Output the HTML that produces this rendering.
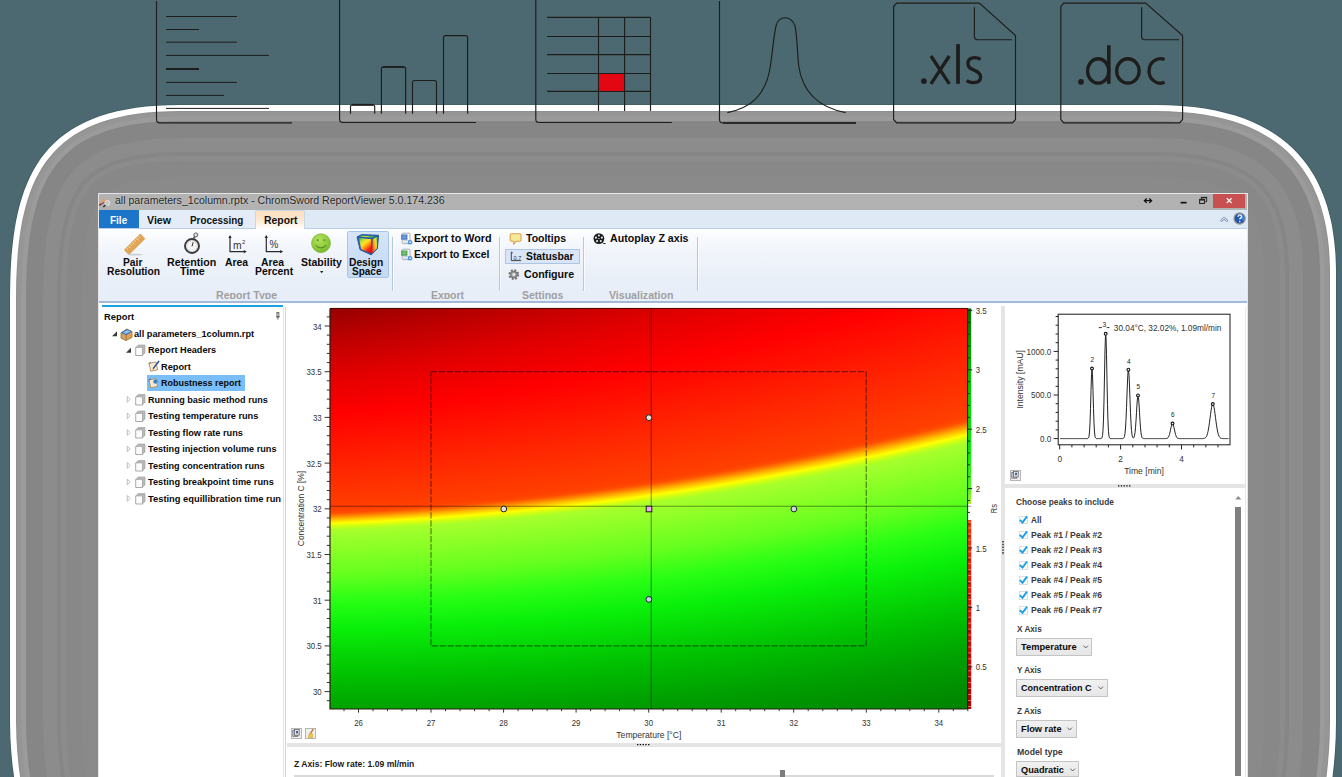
<!DOCTYPE html>
<html><head><meta charset="utf-8"><title>ChromSword ReportViewer</title>
<style>
html,body{margin:0;padding:0;width:1342px;height:777px;overflow:hidden;}
body{width:1342px;height:777px;overflow:hidden;position:relative;background:#4c6971;font-family:"Liberation Sans",sans-serif;}
.t{position:absolute;line-height:12px;height:12px;white-space:nowrap;transform-origin:0 0;}
.a{position:absolute;}
svg{position:absolute;overflow:visible;}
</style></head><body>

<svg id="panel" style="left:0;top:0" width="1342" height="777" viewBox="0 0 1342 777">
<path d="M13.3 777 L11.7 765 L10.5 752 L9.6 738 L9.2 722 L9.2 300.0 L9.3 290.3 L9.5 280.8 L9.8 271.5 L10.3 262.4 L10.9 253.5 L11.8 244.8 L12.8 236.4 L14.0 228.1 L15.5 220.0 L17.1 212.2 L19.0 204.6 L21.2 197.2 L23.6 190.1 L26.3 183.2 L29.3 176.5 L32.6 170.1 L36.2 164.0 L40.2 158.2 L44.4 152.6 L49.1 147.3 L54.0 142.2 L59.4 137.5 L65.1 133.0 L71.3 128.9 L77.8 125.0 L84.8 121.5 L92.2 118.3 L100.0 115.4 L108.3 112.8 L117.1 110.5 L126.3 108.6 L136.0 107.0 L146.2 105.8 L157.0 104.9 L168.2 104.4 L180.0 104.2 L1156.0 104.2 L1169.2 104.4 L1181.7 105.1 L1193.7 106.3 L1205.0 107.8 L1215.7 109.8 L1225.8 112.1 L1235.3 114.8 L1244.3 117.9 L1252.8 121.3 L1260.7 125.0 L1268.2 129.0 L1275.1 133.3 L1281.6 137.9 L1287.6 142.7 L1293.2 147.7 L1298.3 153.0 L1303.1 158.4 L1307.4 164.0 L1311.4 169.8 L1315.0 175.7 L1318.2 181.8 L1321.2 187.9 L1323.8 194.1 L1326.1 200.4 L1328.1 206.8 L1329.9 213.2 L1331.4 219.6 L1332.7 226.0 L1333.8 232.4 L1334.7 238.7 L1335.4 245.0 L1336.0 251.2 L1336.4 257.3 L1336.6 263.3 L1336.8 269.2 L1336.8 275.0 L1336.8 722 L1336.5 738 L1335.7 752 L1334.6 765 L1333.3 777 Z" fill="#3f5c64"/>
<path d="M14.1 777 L12.5 765 L11.3 752 L10.4 738 L10.0 722 L10.0 300.0 L10.1 290.3 L10.3 280.9 L10.6 271.6 L11.1 262.5 L11.7 253.6 L12.6 244.9 L13.6 236.5 L14.8 228.2 L16.2 220.2 L17.9 212.4 L19.8 204.8 L22.0 197.4 L24.4 190.3 L27.1 183.5 L30.0 176.9 L33.3 170.5 L36.9 164.4 L40.8 158.6 L45.1 153.1 L49.6 147.8 L54.6 142.8 L59.9 138.1 L65.6 133.7 L71.7 129.6 L78.2 125.7 L85.1 122.2 L92.5 119.0 L100.3 116.1 L108.5 113.6 L117.2 111.3 L126.4 109.4 L136.1 107.8 L146.3 106.6 L157.0 105.7 L168.2 105.2 L180.0 105.0 L1156.0 105.0 L1169.2 105.2 L1181.7 105.9 L1193.6 107.0 L1204.8 108.6 L1215.5 110.5 L1225.6 112.9 L1235.1 115.6 L1244.0 118.6 L1252.5 122.0 L1260.4 125.7 L1267.8 129.7 L1274.7 134.0 L1281.1 138.5 L1287.1 143.3 L1292.6 148.3 L1297.7 153.5 L1302.4 158.9 L1306.8 164.5 L1310.7 170.2 L1314.3 176.1 L1317.5 182.1 L1320.4 188.2 L1323.0 194.4 L1325.3 200.7 L1327.4 207.0 L1329.1 213.4 L1330.7 219.8 L1332.0 226.1 L1333.0 232.5 L1333.9 238.8 L1334.6 245.1 L1335.2 251.3 L1335.6 257.4 L1335.8 263.4 L1336.0 269.3 L1336.0 275.0 L1336.0 722 L1335.7 738 L1334.9 752 L1333.8 765 L1332.5 777 Z" fill="#ffffff"/>
<path d="M20.1 777 L18.5 765 L17.3 752 L16.4 738 L16.0 722 L16.0 300.0 L16.1 290.4 L16.2 281.0 L16.6 271.9 L17.1 262.9 L17.7 254.1 L18.5 245.6 L19.5 237.3 L20.7 229.2 L22.1 221.3 L23.8 213.7 L25.6 206.4 L27.7 199.3 L30.0 192.4 L32.6 185.8 L35.4 179.5 L38.6 173.4 L42.0 167.6 L45.7 162.1 L49.7 156.9 L54.0 151.9 L58.7 147.2 L63.7 142.7 L69.1 138.5 L74.9 134.6 L81.1 131.0 L87.7 127.6 L94.7 124.6 L102.2 121.8 L110.2 119.3 L118.6 117.2 L127.5 115.3 L137.0 113.8 L146.9 112.6 L157.4 111.7 L168.4 111.2 L180.0 111.0 L1156.0 111.0 L1169.0 111.2 L1181.2 111.9 L1192.9 113.0 L1203.9 114.5 L1214.3 116.4 L1224.1 118.7 L1233.3 121.3 L1242.0 124.2 L1250.1 127.5 L1257.7 131.1 L1264.8 134.9 L1271.4 139.0 L1277.5 143.3 L1283.2 147.8 L1288.5 152.6 L1293.3 157.6 L1297.8 162.7 L1301.9 168.0 L1305.7 173.5 L1309.1 179.1 L1312.2 184.8 L1314.9 190.7 L1317.4 196.6 L1319.7 202.7 L1321.6 208.7 L1323.3 214.9 L1324.8 221.0 L1326.1 227.2 L1327.1 233.4 L1328.0 239.5 L1328.7 245.7 L1329.2 251.7 L1329.6 257.7 L1329.8 263.6 L1330.0 269.4 L1330.0 275.0 L1330.0 722 L1329.7 738 L1328.9 752 L1327.8 765 L1326.5 777 Z" fill="#8f8f8f"/>
<path d="M21.1 777 L19.5 765 L18.3 752 L17.4 738 L17.0 722 L17.0 300.0 L17.1 290.4 L17.2 281.1 L17.6 271.9 L18.1 262.9 L18.7 254.2 L19.5 245.7 L20.5 237.4 L21.7 229.3 L23.1 221.5 L24.7 213.9 L26.6 206.6 L28.6 199.6 L31.0 192.7 L33.5 186.2 L36.4 179.9 L39.5 173.9 L42.8 168.2 L46.5 162.7 L50.5 157.5 L54.8 152.6 L59.4 147.9 L64.4 143.5 L69.7 139.3 L75.4 135.5 L81.6 131.9 L88.1 128.6 L95.1 125.5 L102.5 122.8 L110.4 120.3 L118.8 118.1 L127.7 116.3 L137.1 114.8 L147.0 113.6 L157.5 112.7 L168.5 112.2 L180.0 112.0 L1156.0 112.0 L1168.9 112.2 L1181.2 112.9 L1192.8 114.0 L1203.7 115.5 L1214.1 117.4 L1223.8 119.6 L1233.0 122.3 L1241.6 125.2 L1249.7 128.4 L1257.2 131.9 L1264.3 135.7 L1270.8 139.8 L1276.9 144.1 L1282.5 148.6 L1287.8 153.3 L1292.6 158.3 L1297.0 163.4 L1301.1 168.6 L1304.8 174.0 L1308.2 179.6 L1311.3 185.3 L1314.0 191.1 L1316.5 197.0 L1318.7 203.0 L1320.7 209.0 L1322.4 215.1 L1323.8 221.3 L1325.1 227.4 L1326.1 233.5 L1327.0 239.7 L1327.7 245.8 L1328.2 251.8 L1328.6 257.7 L1328.8 263.6 L1329.0 269.4 L1329.0 275.0 L1329.0 722 L1328.7 738 L1327.9 752 L1326.8 765 L1325.5 777 Z" fill="#969696"/>
<path d="M25.6 777 L24.0 765 L22.8 752 L21.9 738 L21.5 722 L21.5 300.0 L21.6 290.5 L21.7 281.2 L22.1 272.1 L22.5 263.2 L23.2 254.6 L24.0 246.2 L25.0 238.0 L26.2 230.1 L27.5 222.4 L29.1 215.0 L30.9 207.8 L32.9 200.9 L35.2 194.3 L37.7 187.9 L40.4 181.9 L43.4 176.1 L46.6 170.6 L50.2 165.3 L54.0 160.3 L58.1 155.6 L62.5 151.2 L67.2 146.9 L72.4 143.0 L77.8 139.3 L83.7 135.8 L90.0 132.6 L96.8 129.7 L104.0 127.0 L111.7 124.6 L119.8 122.5 L128.5 120.7 L137.7 119.2 L147.5 118.0 L157.7 117.2 L168.6 116.7 L180.0 116.5 L1156.0 116.5 L1168.8 116.7 L1180.8 117.4 L1192.3 118.5 L1203.0 119.9 L1213.2 121.8 L1222.7 124.0 L1231.7 126.5 L1240.1 129.4 L1247.9 132.5 L1255.2 136.0 L1262.0 139.6 L1268.3 143.6 L1274.2 147.7 L1279.6 152.0 L1284.6 156.6 L1289.3 161.3 L1293.5 166.2 L1297.5 171.3 L1301.0 176.5 L1304.3 181.8 L1307.3 187.3 L1309.9 192.9 L1312.3 198.6 L1314.5 204.4 L1316.3 210.3 L1318.0 216.3 L1319.4 222.2 L1320.6 228.2 L1321.7 234.2 L1322.5 240.2 L1323.2 246.2 L1323.7 252.1 L1324.1 258.0 L1324.3 263.8 L1324.5 269.4 L1324.5 275.0 L1324.5 722 L1324.2 738 L1323.4 752 L1322.3 765 L1321.0 777 Z" fill="#9b9b9b"/>
<path d="M30.1 777 L28.5 765 L27.3 752 L26.4 738 L26.0 722 L26.0 300.0 L26.1 290.5 L26.2 281.3 L26.6 272.3 L27.0 263.5 L27.7 255.0 L28.5 246.6 L29.4 238.6 L30.6 230.8 L31.9 223.2 L33.5 216.0 L35.3 209.0 L37.2 202.3 L39.4 195.8 L41.8 189.7 L44.5 183.8 L47.3 178.3 L50.5 173.0 L53.8 167.9 L57.5 163.2 L61.4 158.7 L65.6 154.4 L70.1 150.4 L75.0 146.6 L80.2 143.1 L85.9 139.8 L91.9 136.7 L98.5 133.9 L105.4 131.3 L112.9 129.0 L120.8 126.9 L129.3 125.1 L138.4 123.7 L147.9 122.5 L158.0 121.7 L168.7 121.2 L180.0 121.0 L1156.0 121.0 L1168.6 121.2 L1180.5 121.9 L1191.7 122.9 L1202.3 124.4 L1212.3 126.2 L1221.6 128.4 L1230.3 130.8 L1238.5 133.6 L1246.1 136.7 L1253.2 140.0 L1259.7 143.5 L1265.8 147.3 L1271.5 151.3 L1276.7 155.5 L1281.5 159.8 L1286.0 164.4 L1290.1 169.1 L1293.8 173.9 L1297.3 178.9 L1300.4 184.1 L1303.2 189.4 L1305.8 194.8 L1308.1 200.3 L1310.2 205.9 L1312.0 211.6 L1313.6 217.4 L1315.0 223.2 L1316.2 229.1 L1317.2 234.9 L1318.0 240.8 L1318.7 246.6 L1319.2 252.5 L1319.6 258.2 L1319.8 263.9 L1320.0 269.5 L1320.0 275.0 L1320.0 722 L1319.7 738 L1318.9 752 L1317.8 765 L1316.5 777 Z" fill="#868686"/>
<path d="M47.1 777 L45.5 765 L44.3 752 L43.4 738 L43.0 722 L43.0 300.0 L43.1 290.8 L43.2 281.8 L43.6 273.1 L44.0 264.6 L44.6 256.4 L45.4 248.5 L46.3 240.8 L47.4 233.5 L48.6 226.5 L50.1 219.8 L51.7 213.4 L53.4 207.4 L55.4 201.7 L57.5 196.3 L59.8 191.2 L62.2 186.5 L64.8 182.0 L67.6 177.8 L70.6 173.9 L73.8 170.2 L77.3 166.8 L81.0 163.5 L85.0 160.4 L89.3 157.5 L94.0 154.7 L99.2 152.1 L104.8 149.6 L110.9 147.4 L117.5 145.3 L124.7 143.5 L132.4 141.9 L140.7 140.5 L149.6 139.4 L159.1 138.6 L169.3 138.2 L180.0 138.0 L1156.0 138.0 L1168.0 138.2 L1179.2 138.8 L1189.8 139.8 L1199.6 141.2 L1208.8 142.9 L1217.4 144.8 L1225.3 147.1 L1232.6 149.6 L1239.3 152.3 L1245.5 155.2 L1251.2 158.3 L1256.5 161.5 L1261.3 164.9 L1265.7 168.4 L1269.7 172.1 L1273.5 175.9 L1276.9 179.8 L1280.1 183.9 L1283.0 188.2 L1285.6 192.5 L1288.1 197.1 L1290.3 201.7 L1292.3 206.5 L1294.1 211.4 L1295.7 216.5 L1297.2 221.6 L1298.4 226.9 L1299.5 232.2 L1300.4 237.5 L1301.2 242.9 L1301.8 248.3 L1302.3 253.7 L1302.6 259.1 L1302.8 264.5 L1303.0 269.8 L1303.0 275.0 L1303.0 722 L1302.7 738 L1301.9 752 L1300.8 765 L1299.5 777 Z" fill="#8c8c8c"/>
<path d="M61.1 777 L59.5 765 L58.3 752 L57.4 738 L57.0 722 L57.0 300.0 L57.1 291.0 L57.2 282.2 L57.5 273.7 L58.0 265.5 L58.6 257.6 L59.3 250.0 L60.2 242.7 L61.2 235.8 L62.4 229.2 L63.7 223.0 L65.2 217.1 L66.8 211.6 L68.5 206.5 L70.4 201.7 L72.4 197.3 L74.5 193.2 L76.7 189.5 L79.0 186.0 L81.5 182.8 L84.1 179.8 L86.9 177.0 L89.9 174.3 L93.2 171.7 L96.8 169.3 L100.8 167.0 L105.2 164.7 L110.0 162.6 L115.4 160.6 L121.3 158.8 L127.9 157.1 L135.0 155.6 L142.7 154.4 L151.0 153.4 L160.0 152.6 L169.7 152.2 L180.0 152.0 L1156.0 152.0 L1167.5 152.2 L1178.2 152.8 L1188.2 153.7 L1197.4 155.0 L1206.0 156.6 L1213.9 158.4 L1221.1 160.4 L1227.7 162.7 L1233.7 165.1 L1239.2 167.7 L1244.2 170.4 L1248.7 173.2 L1252.9 176.1 L1256.6 179.1 L1260.0 182.2 L1263.2 185.4 L1266.1 188.7 L1268.8 192.2 L1271.2 195.8 L1273.5 199.5 L1275.6 203.4 L1277.5 207.4 L1279.3 211.6 L1280.9 216.0 L1282.3 220.5 L1283.6 225.1 L1284.8 229.9 L1285.7 234.7 L1286.6 239.7 L1287.3 244.7 L1287.9 249.7 L1288.3 254.8 L1288.6 259.9 L1288.8 264.9 L1289.0 270.0 L1289.0 275.0 L1289.0 722 L1288.7 738 L1287.9 752 L1286.8 765 L1285.5 777 Z" fill="#868686"/>
<path d="M65.1 777 L63.5 765 L62.3 752 L61.4 738 L61.0 722 L61.0 300.0 L61.1 291.0 L61.2 282.3 L61.5 273.8 L62.0 265.7 L62.5 257.9 L63.3 250.4 L64.1 243.2 L65.1 236.4 L66.3 230.0 L67.6 223.9 L69.0 218.2 L70.6 212.8 L72.3 207.9 L74.1 203.3 L76.0 199.0 L78.0 195.2 L80.1 191.6 L82.3 188.3 L84.6 185.3 L87.0 182.5 L89.6 179.9 L92.5 177.4 L95.5 175.0 L98.9 172.7 L102.7 170.5 L106.9 168.4 L111.5 166.3 L116.7 164.4 L122.4 162.6 L128.8 161.0 L135.7 159.6 L143.3 158.3 L151.5 157.3 L160.3 156.6 L169.8 156.2 L180.0 156.0 L1156.0 156.0 L1167.3 156.2 L1177.9 156.8 L1187.7 157.7 L1196.8 159.0 L1205.2 160.5 L1212.9 162.3 L1219.9 164.3 L1226.3 166.4 L1232.2 168.8 L1237.4 171.2 L1242.2 173.8 L1246.5 176.5 L1250.5 179.3 L1254.0 182.1 L1257.3 185.1 L1260.3 188.1 L1263.0 191.2 L1265.5 194.5 L1267.9 197.9 L1270.0 201.5 L1272.0 205.2 L1273.9 209.1 L1275.6 213.1 L1277.1 217.3 L1278.5 221.6 L1279.8 226.1 L1280.9 230.7 L1281.8 235.5 L1282.6 240.3 L1283.3 245.2 L1283.9 250.1 L1284.3 255.1 L1284.6 260.1 L1284.8 265.1 L1285.0 270.1 L1285.0 275.0 L1285.0 722 L1284.7 738 L1283.9 752 L1282.8 765 L1281.5 777 Z" fill="#8c8c8c"/>
<path d="M70.1 777 L68.5 765 L67.3 752 L66.4 738 L66.0 722 L66.0 300.0 L66.1 291.1 L66.2 282.4 L66.5 274.1 L67.0 266.0 L67.5 258.3 L68.2 250.9 L69.1 243.9 L70.1 237.2 L71.2 230.9 L72.5 225.0 L73.9 219.5 L75.4 214.3 L77.0 209.6 L78.7 205.2 L80.5 201.2 L82.4 197.6 L84.3 194.3 L86.3 191.2 L88.5 188.5 L90.7 185.9 L93.1 183.5 L95.6 181.2 L98.5 179.0 L101.6 176.9 L105.1 174.9 L109.0 172.9 L113.4 171.0 L118.3 169.1 L123.8 167.4 L129.9 165.9 L136.6 164.5 L144.0 163.3 L152.0 162.3 L160.6 161.6 L170.0 161.2 L180.0 161.0 L1156.0 161.0 L1167.1 161.2 L1177.5 161.8 L1187.1 162.7 L1196.0 163.9 L1204.2 165.4 L1211.6 167.1 L1218.4 169.0 L1224.6 171.1 L1230.2 173.4 L1235.2 175.7 L1239.7 178.2 L1243.8 180.7 L1247.5 183.3 L1250.8 185.9 L1253.8 188.7 L1256.6 191.5 L1259.1 194.4 L1261.5 197.5 L1263.7 200.6 L1265.7 204.0 L1267.6 207.5 L1269.3 211.1 L1270.9 214.9 L1272.4 218.9 L1273.7 223.1 L1274.9 227.4 L1276.0 231.8 L1276.9 236.4 L1277.7 241.0 L1278.4 245.8 L1278.9 250.6 L1279.3 255.5 L1279.6 260.4 L1279.8 265.2 L1280.0 270.1 L1280.0 275.0 L1280.0 722 L1279.7 738 L1278.9 752 L1277.8 765 L1276.5 777 Z" fill="#888888"/>
<path d="M86.1 777 L84.5 765 L83.3 752 L82.4 738 L82.0 722 L82.0 300.0 L82.1 291.3 L82.2 282.9 L82.5 274.8 L82.9 267.0 L83.5 259.7 L84.1 252.6 L84.9 246.0 L85.9 239.8 L86.9 234.0 L88.1 228.6 L89.3 223.7 L90.6 219.1 L92.0 215.1 L93.4 211.4 L94.9 208.2 L96.4 205.3 L97.9 202.8 L99.4 200.5 L100.9 198.6 L102.4 196.8 L104.1 195.1 L105.9 193.5 L107.8 192.0 L110.1 190.4 L112.8 188.9 L115.8 187.4 L119.4 185.8 L123.5 184.3 L128.2 182.8 L133.5 181.5 L139.5 180.2 L146.2 179.1 L153.6 178.2 L161.7 177.6 L170.5 177.1 L180.0 177.0 L1156.0 177.0 L1166.6 177.2 L1176.3 177.7 L1185.3 178.6 L1193.5 179.7 L1200.9 181.0 L1207.6 182.6 L1213.7 184.3 L1219.0 186.1 L1223.8 188.0 L1228.0 190.0 L1231.7 192.0 L1235.0 194.0 L1237.8 196.1 L1240.4 198.1 L1242.7 200.2 L1244.8 202.3 L1246.7 204.6 L1248.5 206.9 L1250.2 209.3 L1251.8 211.9 L1253.3 214.7 L1254.7 217.6 L1256.0 220.8 L1257.3 224.1 L1258.4 227.7 L1259.4 231.4 L1260.3 235.3 L1261.2 239.3 L1261.9 243.5 L1262.5 247.8 L1263.0 252.2 L1263.4 256.7 L1263.7 261.2 L1263.9 265.8 L1264.0 270.4 L1264.0 275.0 L1264.0 722 L1263.7 738 L1262.9 752 L1261.8 765 L1260.5 777 Z" fill="#8a8a8a"/>
</svg>
<svg id="topicons" style="left:0;top:0" width="1342" height="140" viewBox="0 0 1342 140" fill="none" stroke="#1d1d1b" stroke-width="1.15" stroke-linecap="butt">
<path d="M156.5 1 V119.5 Q156.5 122.8 160 122.8 H292" />
<path d="M166 16.5 H237" stroke-width="1"/>
<path d="M166 29.5 H199" stroke-width="1"/>
<path d="M166 42.2 H237" stroke-width="1"/>
<path d="M166 55.4 H269" stroke-width="1"/>
<path d="M166 69 H199" stroke-width="1.8"/>
<path d="M166 82.4 H237" stroke-width="1"/>
<path d="M166 95.4 H224" stroke-width="1"/>
<path d="M166 108.4 H269" stroke-width="1"/>
<path d="M339.6 0 V119.5 Q339.6 122.5 343 122.5 H476" />
<path d="M350.5 113.8 V106.8 Q350.5 104.8 352.5 104.8 H372.7 Q374.7 104.8 374.7 106.8 V113.8" />
<path d="M352.0 104.8 H373.2" stroke-width="1.8"/>
<path d="M381.4 113.8 V68.9 Q381.4 66.9 383.4 66.9 H403.6 Q405.6 66.9 405.6 68.9 V113.8" />
<path d="M382.9 66.9 H404.1" stroke-width="1.8"/>
<path d="M412.5 113.8 V82.5 Q412.5 80.5 414.5 80.5 H434.5 Q436.5 80.5 436.5 82.5 V113.8" />
<path d="M443.5 113.8 V37.6 Q443.5 35.6 445.5 35.6 H465.6 Q467.6 35.6 467.6 37.6 V113.8" />
<path d="M535.8 0 V119.5 Q535.8 122.5 539 122.5 H671.8" />
<path d="M547 17.4 H650.5" />
<path d="M547 36.5 H650.5" />
<path d="M547 54.6 H650.5" />
<path d="M547 73.5 H650.5" />
<path d="M547 91.4 H650.5" />
<path d="M598.5 17.4 V110.9" />
<path d="M624.6 17.4 V110.9" />
<path d="M650.5 17.4 V110.9" />
<rect x="599" y="74" width="25.1" height="16.9" fill="#e30613" stroke="none"/>
<path d="M719.5 1 V119.5 Q719.5 123 723 123 H856" />
<path d="M723 123 H856" stroke-width="1.6"/>
<path d="M727.3 112.6 C750 108, 766 96, 770.4 66 C773 48, 774 34, 776 26 C779 15, 791 15, 795 26 C797 34, 797 48, 798.7 66 C803 96, 822 108, 845.6 112.6" />
<path d="M896.6 3.1 H979.4 L1015.5 35.6 V119.5 L1012.5 122.9 H896.6 L893.6 119.5 V6.5 Z" />
<path d="M974.4 7.3 V36.6 Q974.4 39.7 977.4 39.7 H1012" />
<path d="M1063.8 3.1 H1145.6 L1182.6 35.6 V119.5 L1179.6 122.9 H1063.8 L1060.8 119.5 V6.5 Z" />
<path d="M1141.6 7.3 V36.6 Q1141.6 39.7 1144.6 39.7 H1179" />
<g stroke-width="3.3" stroke="#1d1d1b">
<circle cx="923.9" cy="81.1" r="2.9" fill="#1d1d1b" stroke="none"/>
<path d="M931 56 L949.3 83.8 M949.3 56 L931 83.8" />
<path d="M958 44.1 V83.8" stroke-width="3.8"/>
<path d="M980.6 59.3 C977 57.4, 967.9 55.6, 967.9 63.8 C967.9 71.5, 980.6 69.2, 980.6 76.9 C980.6 84.2, 970.5 83.2, 966.6 80.6" />
<circle cx="1081" cy="81.8" r="2.9" fill="#1d1d1b" stroke="none"/>
<ellipse cx="1098.2" cy="70.95" rx="10.6" ry="12.2"/>
<path d="M1108.8 45.2 V83.9" stroke-width="3.6"/>
<ellipse cx="1127.9" cy="70.95" rx="11.25" ry="12.2"/>
<path d="M1164.6 59.6 A11.4 12.2 0 1 0 1164.6 82.3" />
</g>
</svg>
<div class="a" style="left:98px;top:193px;width:1150px;height:584px;background:#e6e6e6;"></div>
<div class="a" style="left:99px;top:194px;width:1148px;height:583px;background:#fff;"></div>
<div class="a" style="left:99px;top:194px;width:1148px;height:16.5px;background:#b2b2b2;"></div>
<div class="t" style="left:114.80px;top:194.53px;font-size:10.3px;color:#262626;transform:scaleX(1.0253);text-shadow:0 0 2px rgba(255,255,255,.55);">all parameters_1column.rptx - ChromSword ReportViewer 5.0.174.236</div>
<svg style="left:0;top:0" width="1342" height="777" viewBox="0 0 1342 777"><path d="M100 203.6 L101.3 200.2 L102.5 202 L103.7 196 L105.7 202.8 Z" fill="#f2a23a"/><path d="M99.5 204.9 L104.8 202.3" stroke="#8040a8" stroke-width="1.2"/><path d="M99.2 205.2 L101 204.3" stroke="#6a3a14" stroke-width="1.3"/><circle cx="107.4" cy="202.9" r="2.5" fill="rgba(205,205,205,.7)" stroke="#e2e2e2" stroke-width="1"/><path d="M105.5 204.9 L103.3 206.9" stroke="#2e2e2e" stroke-width="1.4"/></svg>
<svg style="left:1130px;top:193px" width="118" height="18" viewBox="1130 193 118 18"><path d="M1144.5 200.7 H1151.5 M1146.7 198.5 L1144.4 200.7 L1146.7 202.9 M1149.3 198.5 L1151.6 200.7 L1149.3 202.9" stroke="#111" stroke-width="1.25" fill="none"/><rect x="1180.6" y="201.8" width="6" height="1.7" fill="#111"/><rect x="1199.6" y="199.8" width="4.8" height="3.7" fill="none" stroke="#222" stroke-width="1"/><path d="M1199.1 199.6 h5.8" stroke="#222" stroke-width="1.5"/><path d="M1201.4 198.9 V197.6 H1206.6 V201.7 H1205.2" fill="none" stroke="#222" stroke-width="1"/><path d="M1200.9 197.5 h6.2" stroke="#222" stroke-width="1.3"/><rect x="1213" y="194" width="32" height="14" fill="#c75050"/><path d="M1226.8 198.2 l4.8 4.8 M1231.6 198.2 l-4.8 4.8" stroke="#fff8ea" stroke-width="1.25"/></svg>
<div class="a" style="left:99px;top:210px;width:1148px;height:19px;background:#dfe9f5;"></div>
<div class="a" style="left:99px;top:228px;width:1148px;height:1px;background:#b9cde6;"></div>
<div class="a" style="left:139px;top:210px;width:116px;height:18px;background:#e3ecf7;"></div>
<div class="a" style="left:99px;top:210px;width:40px;height:18px;background:#1b75c9;"></div>
<div class="t" style="left:110.40px;top:213.96px;font-size:10.5px;font-weight:bold;color:#fff;transform:scaleX(0.9509);">File</div>
<div class="t" style="left:146.90px;top:213.96px;font-size:10.5px;font-weight:bold;color:#111;transform:scaleX(1.0110);">View</div>
<div class="t" style="left:190.20px;top:213.96px;font-size:10.5px;font-weight:bold;color:#111;transform:scaleX(0.9433);">Processing</div>
<div class="a" style="left:255px;top:210px;width:50px;height:19px;background:linear-gradient(#fddfbe 0%,#fde5cb 42%,#fdf2e4 72%,#fefefe 100%);border:1px solid #c9d6e6;border-bottom:none;box-sizing:border-box;border-radius:2px 2px 0 0;"></div>
<div class="t" style="left:263.80px;top:213.96px;font-size:10.5px;font-weight:bold;color:#111;transform:scaleX(0.9901);">Report</div>
<svg style="left:1215px;top:211px" width="32" height="17" viewBox="1215 211 32 17"><path d="M1221.5 220.7 L1224.2 218.1 L1226.9 220.7" fill="none" stroke="#7f93b8" stroke-width="2.5" stroke-linejoin="round" stroke-linecap="round"/><path d="M1221.5 220.7 L1224.2 218.1 L1226.9 220.7" fill="none" stroke="#fff" stroke-width="1" stroke-linejoin="round" stroke-linecap="round"/><circle cx="1239.6" cy="218.5" r="5.6" fill="#1c56ad" stroke="#9a9a9a" stroke-width="1.2"/><path d="M1240.5 214.5 a4.2 4.2 0 0 1 3 6.5 l-3 -2.5 Z" fill="#3a8ae0"/><path d="M1237.9 216.8 q0.3 -1.9 1.9 -1.9 q1.8 0 1.8 1.6 q0 1 -1 1.6 q-0.8 0.5 -0.8 1.5" fill="none" stroke="#fff" stroke-width="1.3"/><circle cx="1239.8" cy="221.6" r="0.8" fill="#fff"/></svg>
<div class="a" style="left:99px;top:229px;width:1148px;height:72px;background:linear-gradient(#fdfeff 0%,#f3f6fb 25%,#e9eff8 70%,#e8eef8 100%);"></div>
<div class="a" style="left:99px;top:300.9px;width:1148px;height:1.8000000000000114px;background:#a3bbd8;"></div>
<div class="a" style="left:346.5px;top:231px;width:42.0px;height:47px;background:linear-gradient(#d6e5f8,#c4d9f3);border:1px solid #a7c4ea;box-sizing:border-box;border-radius:2px;"></div>
<div class="a" style="left:392.1px;top:237px;width:1.0px;height:54px;background:#b6c8de;"></div>
<div class="a" style="left:393.1px;top:237px;width:1.0px;height:54px;background:rgba(255,255,255,.7);"></div>
<div class="a" style="left:499.0px;top:237px;width:1.0px;height:54px;background:#b6c8de;"></div>
<div class="a" style="left:500.0px;top:237px;width:1.0px;height:54px;background:rgba(255,255,255,.7);"></div>
<div class="a" style="left:583.0px;top:237px;width:1.0px;height:54px;background:#b6c8de;"></div>
<div class="a" style="left:584.0px;top:237px;width:1.0px;height:54px;background:rgba(255,255,255,.7);"></div>
<div class="a" style="left:697.0px;top:237px;width:1.0px;height:54px;background:#b6c8de;"></div>
<div class="a" style="left:698.0px;top:237px;width:1.0px;height:54px;background:rgba(255,255,255,.7);"></div>
<div class="t" style="left:123.00px;top:256.16px;font-size:10.5px;font-weight:bold;color:#0c0c0c;transform:scaleX(0.9775);">Pair</div>
<div class="t" style="left:107.10px;top:265.16px;font-size:10.5px;font-weight:bold;color:#0c0c0c;transform:scaleX(0.9770);">Resolution</div>
<div class="t" style="left:166.50px;top:256.16px;font-size:10.5px;font-weight:bold;color:#0c0c0c;transform:scaleX(1.0162);">Retention</div>
<div class="t" style="left:179.50px;top:265.16px;font-size:10.5px;font-weight:bold;color:#0c0c0c;transform:scaleX(1.0116);">Time</div>
<div class="t" style="left:225.30px;top:256.16px;font-size:10.5px;font-weight:bold;color:#0c0c0c;transform:scaleX(0.9894);">Area</div>
<div class="t" style="left:260.90px;top:256.16px;font-size:10.5px;font-weight:bold;color:#0c0c0c;transform:scaleX(0.9851);">Area</div>
<div class="t" style="left:254.80px;top:265.16px;font-size:10.5px;font-weight:bold;color:#0c0c0c;transform:scaleX(0.9891);">Percent</div>
<div class="t" style="left:300.70px;top:256.16px;font-size:10.5px;font-weight:bold;color:#0c0c0c;transform:scaleX(1.0014);">Stability</div>
<div class="t" style="left:349.20px;top:256.16px;font-size:10.5px;font-weight:bold;color:#0c0c0c;transform:scaleX(0.9769);">Design</div>
<div class="t" style="left:352.10px;top:265.16px;font-size:10.5px;font-weight:bold;color:#0c0c0c;transform:scaleX(0.9535);">Space</div>
<svg style="left:318px;top:270px" width="8" height="5" viewBox="0 0 8 5"><path d="M2 1 h3.4 l-1.7 2.2 Z" fill="#222"/></svg>
<div class="t" style="left:414.10px;top:232.46px;font-size:10.5px;font-weight:bold;color:#0c0c0c;transform:scaleX(1.0247);">Export to Word</div>
<div class="t" style="left:414.10px;top:248.26px;font-size:10.5px;font-weight:bold;color:#0c0c0c;transform:scaleX(0.9851);">Export to Excel</div>
<div class="t" style="left:526.20px;top:232.06px;font-size:10.5px;font-weight:bold;color:#0c0c0c;transform:scaleX(0.9988);">Tooltips</div>
<div class="a" style="left:505.4px;top:248.8px;width:74.39999999999998px;height:15.5px;background:#d9e6f7;border:1px solid #aac5e8;box-sizing:border-box;"></div>
<div class="t" style="left:526.20px;top:250.06px;font-size:10.5px;font-weight:bold;color:#0c0c0c;transform:scaleX(0.9828);">Statusbar</div>
<div class="t" style="left:524.00px;top:268.26px;font-size:10.5px;font-weight:bold;color:#0c0c0c;transform:scaleX(1.0105);">Configure</div>
<div class="t" style="left:609.80px;top:232.06px;font-size:10.5px;font-weight:bold;color:#0c0c0c;transform:scaleX(1.0116);">Autoplay Z axis</div>
<div class="a" style="left:99px;top:286px;width:1148px;height:13.1px;overflow:hidden;">
<div class="t" style="left:117.00px;top:2.99px;font-size:11px;font-weight:bold;color:#9f9f9f;transform:scaleX(0.9659);">Report Type</div>
<div class="t" style="left:331.80px;top:2.99px;font-size:11px;font-weight:bold;color:#9f9f9f;transform:scaleX(0.9444);">Export</div>
<div class="t" style="left:423.10px;top:2.99px;font-size:11px;font-weight:bold;color:#9f9f9f;transform:scaleX(0.9494);">Settings</div>
<div class="t" style="left:510.10px;top:2.99px;font-size:11px;font-weight:bold;color:#9f9f9f;transform:scaleX(0.9606);">Visualization</div>
</div>
<svg id="ribicons" style="left:0;top:0" width="1342" height="777" viewBox="0 0 1342 777">
<g transform="translate(134.6,244.3) rotate(-45)"><rect x="-11.3" y="-3.3" width="22.6" height="6.6" fill="#e2a552" stroke="#c98a35" stroke-width=".5"/><path d="M-8.4 -3.3 v2.4 M-5.6 -3.3 v3.3 M-2.8 -3.3 v2.4 M0 -3.3 v3.3 M2.8 -3.3 v2.4 M5.6 -3.3 v3.3 M8.4 -3.3 v2.4" stroke="#f8e6c8" stroke-width=".8"/></g>
<ellipse cx="135" cy="254.6" rx="8" ry="0.9" fill="#c9ced6"/>
<circle cx="192" cy="246" r="7" fill="#f4f4f4" stroke="#3a3a3a" stroke-width="1.9"/><circle cx="192" cy="246.2" r="5.2" fill="none" stroke="#9a9a9a" stroke-width=".8" stroke-dasharray="0.8 1.2"/><path d="M192 246.4 L193.2 242.2" stroke="#333" stroke-width="1"/><path d="M193.4 238.9 L195.2 235.6" stroke="#555" stroke-width="1.8"/><circle cx="195.8" cy="234.9" r="2" fill="#ddd" stroke="#555" stroke-width=".9"/>
<path d="M230 236.2 V251.6 H245.6" fill="none" stroke="#2b2b2b" stroke-width="1.2"/><path d="M228.3 238 L230 235 L231.7 238 Z M243.8 249.9 L246.8 251.6 L243.8 253.3 Z" fill="#2b2b2b"/>
<text x="233" y="249" font-family="Liberation Sans, sans-serif" font-size="10.5" fill="#333" textLength="8.6" lengthAdjust="spacingAndGlyphs">m</text><text x="242" y="243.6" font-family="Liberation Sans, sans-serif" font-size="6" fill="#333">2</text>
<path d="M266.3 236.2 V251.6 H281.9" fill="none" stroke="#2b2b2b" stroke-width="1.2"/><path d="M264.6 238 L266.3 235 L268 238 Z M280.1 249.9 L283.1 251.6 L280.1 253.3 Z" fill="#2b2b2b"/>
<text x="269.6" y="247.8" font-family="Liberation Sans, sans-serif" font-size="10" fill="#333" textLength="8.8" lengthAdjust="spacingAndGlyphs">%</text>
<defs><radialGradient id="sm" cx=".4" cy=".3" r=".8"><stop offset="0" stop-color="#b4e05c"/><stop offset=".6" stop-color="#8ccb3c"/><stop offset="1" stop-color="#6fb02a"/></radialGradient></defs>
<circle cx="321" cy="243.2" r="9.4" fill="url(#sm)" stroke="#7db736" stroke-width=".8"/><circle cx="317.8" cy="240.2" r="1.1" fill="#6a9a2c"/><circle cx="324.2" cy="240.2" r="1.1" fill="#6a9a2c"/><path d="M315.8 245.3 Q321 250.6 326.2 245.3" fill="none" stroke="#5e8f26" stroke-width="1.2"/>
<defs><linearGradient id="cf1" x1="0.1" y1="0" x2="0.75" y2="1"><stop offset="0" stop-color="#35b24a"/><stop offset=".22" stop-color="#c8e03a"/><stop offset=".42" stop-color="#ffe020"/><stop offset=".62" stop-color="#ff8a10"/><stop offset=".82" stop-color="#f02818"/><stop offset="1" stop-color="#e01010"/></linearGradient><linearGradient id="cf2" x1="0" y1=".6" x2="1" y2=".2"><stop offset="0" stop-color="#f03018"/><stop offset=".4" stop-color="#ffb020"/><stop offset=".7" stop-color="#e8e030"/><stop offset="1" stop-color="#40b048"/></linearGradient></defs>
<g stroke-linejoin="round"><path d="M357.1 236.9 L361.8 234.6 L378.5 235.3 L377.4 248.7 L371.3 254.8 L360.1 249.8 Z" fill="#2a62b4"/><path d="M358.9 237.7 L371.4 239.3 L370.9 253.6 L361.2 249.2 Z" fill="url(#cf1)"/><path d="M372.4 239.2 L377.7 236.5 L376.8 248.3 L372 253.4 Z" fill="url(#cf2)"/><path d="M358.6 236.7 L362 235.2 L376.8 235.8 L371.8 237.9 Z" fill="#3aa860"/><path d="M362.5 236 L370 236.3 L368 237.3 L361 236.7 Z" fill="#d8c840"/><path d="M357.1 236.9 L361.8 234.6 L378.5 235.3 L377.4 248.7 L371.3 254.8 L360.1 249.8 Z M371.8 238.5 L371.3 254.8 M357.1 236.9 L371.8 238.5 L378.5 235.3" fill="none" stroke="#2456a4" stroke-width="1"/></g>
<rect x="402.2" y="233.2" width="7.8" height="10.4" rx=".8" fill="#fbfbfb" stroke="#97a0ad" stroke-width=".8"/><path d="M403.4 240.39999999999998 h5.2 M403.4 242.0 h3.4" stroke="#b4bcc8" stroke-width=".7"/><rect x="401.2" y="234.5" width="6.2" height="5.2" fill="#3f74c8"/><path d="M402.2 236.0 h4.2 M402.2 237.79999999999998 h4.2" stroke="#9fc0ee" stroke-width=".8"/><circle cx="410" cy="242.2" r="2.3" fill="#3a8ee4"/><path d="M408.7 242.2 h2 M409.9 241.1 l1.2 1.1 l-1.2 1.1" stroke="#fff" stroke-width=".7" fill="none"/>
<rect x="402.2" y="249.2" width="7.8" height="10.4" rx=".8" fill="#fbfbfb" stroke="#97a0ad" stroke-width=".8"/><path d="M403.4 256.4 h5.2 M403.4 258.0 h3.4" stroke="#b4bcc8" stroke-width=".7"/><rect x="401.2" y="250.5" width="6.2" height="5.2" fill="#45a04c"/><path d="M402.2 252.0 h4.2 M402.2 253.79999999999998 h4.2" stroke="#a8dba8" stroke-width=".8"/><circle cx="410" cy="258.2" r="2.3" fill="#3a8ee4"/><path d="M408.7 258.2 h2 M409.9 257.09999999999997 l1.2 1.1 l-1.2 1.1" stroke="#fff" stroke-width=".7" fill="none"/>
<path d="M511.6 233.8 h8 q1.4 0 1.4 1.4 v4.6 q0 1.4 -1.4 1.4 h-3.2 l-2.6 2.8 v-2.8 h-2.2 q-1.4 0 -1.4 -1.4 v-4.6 q0 -1.4 1.4 -1.4 Z" fill="#f3ea9a" stroke="#e2a048" stroke-width="1.1"/>
<path d="M511.3 251.6 V260.6 H521.2" fill="none" stroke="#444" stroke-width="1"/><path d="M511.3 253.6 l1.8 -1.2" stroke="#444" stroke-width=".8"/><text x="513.6" y="259.6" font-family="Liberation Sans, sans-serif" font-size="5.6" fill="#333">0.7</text>
<circle cx="513.8" cy="274.6" r="4.3" fill="none" stroke="#6c6c6c" stroke-width="2.2" stroke-dasharray="1.75 1.63"/><circle cx="513.8" cy="274.6" r="3.9" fill="#7b7b7b"/><circle cx="513.8" cy="274.6" r="2.6" fill="#9a9a9a"/><circle cx="513.8" cy="274.6" r="1.5" fill="#e4eaf3"/>
<circle cx="598.9" cy="238.6" r="5.4" fill="#1a1a1a"/><circle cx="598.90" cy="235.50" r="1.05" fill="#e9eef6"/><circle cx="601.85" cy="237.64" r="1.05" fill="#e9eef6"/><circle cx="600.72" cy="241.11" r="1.05" fill="#e9eef6"/><circle cx="597.08" cy="241.11" r="1.05" fill="#e9eef6"/><circle cx="595.95" cy="237.64" r="1.05" fill="#e9eef6"/><circle cx="598.9" cy="238.6" r=".7" fill="#e9eef6"/><path d="M602.5 242.6 q1.2 1.4 3 1" stroke="#1a1a1a" stroke-width="1" fill="none"/>
</svg>
<div class="a" style="left:102px;top:305px;width:181px;height:2px;background:#1ba1e2;"></div>
<div class="a" style="left:283px;top:307px;width:1px;height:470px;background:#e3e3e3;"></div>
<div class="a" style="left:285px;top:307px;width:1px;height:470px;background:#d4d4d4;"></div>
<div class="t" style="left:103.80px;top:310.88px;font-size:9.3px;font-weight:bold;color:#0a0a0a;transform:scaleX(1.0078);">Report</div>
<div class="t" style="left:133.70px;top:327.88px;font-size:9.3px;font-weight:bold;color:#0a0a0a;transform:scaleX(0.9888);">all parameters_1column.rpt</div>
<div class="t" style="left:147.70px;top:344.38px;font-size:9.3px;font-weight:bold;color:#0a0a0a;transform:scaleX(0.9847);">Report Headers</div>
<div class="t" style="left:161.40px;top:360.88px;font-size:9.3px;font-weight:bold;color:#0a0a0a;transform:scaleX(0.9944);">Report</div>
<div class="a" style="left:147.3px;top:375.3px;width:97.6px;height:15.899999999999977px;background:#79bdf9;"></div>
<div class="t" style="left:161.40px;top:377.38px;font-size:9.3px;font-weight:bold;color:#0a0a0a;transform:scaleX(0.9664);">Robustness report</div>
<div class="t" style="left:147.60px;top:393.88px;font-size:9.3px;font-weight:bold;color:#0a0a0a;transform:scaleX(0.9742);">Running basic method runs</div>
<div class="t" style="left:147.60px;top:410.38px;font-size:9.3px;font-weight:bold;color:#0a0a0a;transform:scaleX(0.9906);">Testing temperature runs</div>
<div class="t" style="left:147.60px;top:426.88px;font-size:9.3px;font-weight:bold;color:#0a0a0a;transform:scaleX(0.9902);">Testing flow rate runs</div>
<div class="t" style="left:147.60px;top:443.38px;font-size:9.3px;font-weight:bold;color:#0a0a0a;transform:scaleX(0.9803);">Testing injection volume runs</div>
<div class="t" style="left:147.60px;top:459.88px;font-size:9.3px;font-weight:bold;color:#0a0a0a;transform:scaleX(0.9783);">Testing concentration runs</div>
<div class="t" style="left:147.60px;top:476.38px;font-size:9.3px;font-weight:bold;color:#0a0a0a;transform:scaleX(0.9910);">Testing breakpoint time runs</div>
<div class="t" style="left:147.60px;top:492.88px;font-size:9.3px;font-weight:bold;color:#0a0a0a;transform:scaleX(1.0036);">Testing equillibration time run</div>
<svg id="treeicons" style="left:0;top:0" width="1342" height="777" viewBox="0 0 1342 777">
<path d="M276.3 312.6 h3 M277 312.8 v4 h1.8 v-4 M276 316.9 h3.8 M277.9 317 v2.6" stroke="#444" stroke-width=".8" fill="none"/>
<path d="M117 331.2 V336.2 H112 Z" fill="#3a3a3a"/><path d="M131 347.7 V352.7 H126 Z" fill="#3a3a3a"/>
<path d="M127.3 396.5 L130.1 399.4 L127.3 402.29999999999995 Z" fill="#fff" stroke="#a9a9a9" stroke-width=".75"/>
<path d="M127.3 413.0 L130.1 415.9 L127.3 418.79999999999995 Z" fill="#fff" stroke="#a9a9a9" stroke-width=".75"/>
<path d="M127.3 429.5 L130.1 432.4 L127.3 435.29999999999995 Z" fill="#fff" stroke="#a9a9a9" stroke-width=".75"/>
<path d="M127.3 446.0 L130.1 448.9 L127.3 451.79999999999995 Z" fill="#fff" stroke="#a9a9a9" stroke-width=".75"/>
<path d="M127.3 462.5 L130.1 465.4 L127.3 468.29999999999995 Z" fill="#fff" stroke="#a9a9a9" stroke-width=".75"/>
<path d="M127.3 479.0 L130.1 481.9 L127.3 484.79999999999995 Z" fill="#fff" stroke="#a9a9a9" stroke-width=".75"/>
<path d="M127.3 495.5 L130.1 498.4 L127.3 501.29999999999995 Z" fill="#fff" stroke="#a9a9a9" stroke-width=".75"/>
<path d="M121 333 L126.8 329 L132 331.6 L132 337.4 L126 340.6 L121 338.2 Z" fill="#d9a45a" stroke="#8a5a2a" stroke-width=".7"/><path d="M121.4 332.8 L126.9 329.3 L131.6 331.6 L126.2 334.9 Z" fill="#3f7fd0" stroke="#2a5aa0" stroke-width=".5"/><path d="M123.6 332.6 L128.4 330.4 M125 333.6 L129.8 331.2" stroke="#e8f0ff" stroke-width=".8"/><path d="M126.2 335 V340.4" stroke="#8a5a2a" stroke-width=".6"/>
<path d="M138.0 345.0 h7 v8.2 h-7 Z" fill="#c4c4c4" stroke="#9a9a9a" stroke-width=".6"/><path d="M136.8 346.1 h7 v8.2 h-7 Z" fill="#dedede" stroke="#9a9a9a" stroke-width=".6"/><path d="M135.70000000000002 347.3 h6.9 v8.2 h-6.9 Z" fill="#fcfcfc" stroke="#858585" stroke-width=".7"/>
<path d="M138.0 394.5 h7 v8.2 h-7 Z" fill="#c4c4c4" stroke="#9a9a9a" stroke-width=".6"/><path d="M136.8 395.6 h7 v8.2 h-7 Z" fill="#dedede" stroke="#9a9a9a" stroke-width=".6"/><path d="M135.70000000000002 396.8 h6.9 v8.2 h-6.9 Z" fill="#fcfcfc" stroke="#858585" stroke-width=".7"/>
<path d="M138.0 411.0 h7 v8.2 h-7 Z" fill="#c4c4c4" stroke="#9a9a9a" stroke-width=".6"/><path d="M136.8 412.1 h7 v8.2 h-7 Z" fill="#dedede" stroke="#9a9a9a" stroke-width=".6"/><path d="M135.70000000000002 413.3 h6.9 v8.2 h-6.9 Z" fill="#fcfcfc" stroke="#858585" stroke-width=".7"/>
<path d="M138.0 427.5 h7 v8.2 h-7 Z" fill="#c4c4c4" stroke="#9a9a9a" stroke-width=".6"/><path d="M136.8 428.6 h7 v8.2 h-7 Z" fill="#dedede" stroke="#9a9a9a" stroke-width=".6"/><path d="M135.70000000000002 429.8 h6.9 v8.2 h-6.9 Z" fill="#fcfcfc" stroke="#858585" stroke-width=".7"/>
<path d="M138.0 444.0 h7 v8.2 h-7 Z" fill="#c4c4c4" stroke="#9a9a9a" stroke-width=".6"/><path d="M136.8 445.1 h7 v8.2 h-7 Z" fill="#dedede" stroke="#9a9a9a" stroke-width=".6"/><path d="M135.70000000000002 446.3 h6.9 v8.2 h-6.9 Z" fill="#fcfcfc" stroke="#858585" stroke-width=".7"/>
<path d="M138.0 460.5 h7 v8.2 h-7 Z" fill="#c4c4c4" stroke="#9a9a9a" stroke-width=".6"/><path d="M136.8 461.6 h7 v8.2 h-7 Z" fill="#dedede" stroke="#9a9a9a" stroke-width=".6"/><path d="M135.70000000000002 462.8 h6.9 v8.2 h-6.9 Z" fill="#fcfcfc" stroke="#858585" stroke-width=".7"/>
<path d="M138.0 477.0 h7 v8.2 h-7 Z" fill="#c4c4c4" stroke="#9a9a9a" stroke-width=".6"/><path d="M136.8 478.1 h7 v8.2 h-7 Z" fill="#dedede" stroke="#9a9a9a" stroke-width=".6"/><path d="M135.70000000000002 479.3 h6.9 v8.2 h-6.9 Z" fill="#fcfcfc" stroke="#858585" stroke-width=".7"/>
<path d="M138.0 493.5 h7 v8.2 h-7 Z" fill="#c4c4c4" stroke="#9a9a9a" stroke-width=".6"/><path d="M136.8 494.6 h7 v8.2 h-7 Z" fill="#dedede" stroke="#9a9a9a" stroke-width=".6"/><path d="M135.70000000000002 495.8 h6.9 v8.2 h-6.9 Z" fill="#fcfcfc" stroke="#858585" stroke-width=".7"/>
<path d="M149.8 362.59999999999997 h7 v8 h-7 Z" fill="#f7ead2" stroke="#b08a52" stroke-width=".8" transform="rotate(-12 153.3 366.4)"/><path d="M148.5 363.59999999999997 l2.4 -1.4" stroke="#555" stroke-width=".8"/>
<path d="M153.3 368.4 L159.10000000000002 361.0" stroke="#2a4f9a" stroke-width="1.5"/><path d="M152.5 369.59999999999997 l1.6 -0.6 l-1 -1 Z" fill="#333"/>
<path d="M149.8 379.2 h7 v8 h-7 Z" fill="#f7ead2" stroke="#b08a52" stroke-width=".8" transform="rotate(-12 153.3 383)"/><path d="M148.5 380.2 l2.4 -1.4" stroke="#555" stroke-width=".8"/>
<circle cx="155.5" cy="381.6" r="2.2" fill="#2f7fd8"/><path d="M154.70000000000002 379.6 l1.8 0.6 l-1 1.4 Z" fill="#e04030"/><path d="M156.3 382.4 l1.2 1.2" stroke="#e8b030" stroke-width="1"/>
</svg>
<svg id="chart" style="left:0;top:0" width="1342" height="777" viewBox="0 0 1342 777" font-family="Liberation Sans, sans-serif">
<defs>
<linearGradient id="h0" gradientUnits="userSpaceOnUse" x1="336.50" y1="268.4" x2="354.26" y2="748.34"><stop offset="0.0000" stop-color="#850000"/><stop offset="0.0494" stop-color="#8c0000"/><stop offset="0.0870" stop-color="#9b0000"/><stop offset="0.1413" stop-color="#b90000"/><stop offset="0.2207" stop-color="#e10000"/><stop offset="0.3022" stop-color="#ff0000"/><stop offset="0.4087" stop-color="#ff2300"/><stop offset="0.5027" stop-color="#ff4000"/><stop offset="0.5089" stop-color="#ff4e00"/><stop offset="0.5152" stop-color="#ff8000"/><stop offset="0.5219" stop-color="#ffbe00"/><stop offset="0.5298" stop-color="#ffff00"/><stop offset="0.5377" stop-color="#c8ff16"/><stop offset="0.5444" stop-color="#a8ff2a"/><stop offset="0.5590" stop-color="#9cff2a"/><stop offset="0.6382" stop-color="#64ff1e"/><stop offset="0.6924" stop-color="#28ff14"/><stop offset="0.7466" stop-color="#0af00a"/><stop offset="0.7987" stop-color="#05d705"/><stop offset="0.8528" stop-color="#00be00"/><stop offset="0.9216" stop-color="#00a000"/><stop offset="1.0000" stop-color="#008700"/></linearGradient>
<linearGradient id="h1" gradientUnits="userSpaceOnUse" x1="349.50" y1="268.4" x2="369.29" y2="748.18"><stop offset="0.0000" stop-color="#860000"/><stop offset="0.0446" stop-color="#8c0000"/><stop offset="0.0825" stop-color="#9b0000"/><stop offset="0.1373" stop-color="#b90000"/><stop offset="0.2172" stop-color="#e10000"/><stop offset="0.2993" stop-color="#ff0000"/><stop offset="0.4067" stop-color="#ff2300"/><stop offset="0.5014" stop-color="#ff4000"/><stop offset="0.5077" stop-color="#ff4e00"/><stop offset="0.5140" stop-color="#ff8000"/><stop offset="0.5208" stop-color="#ffbe00"/><stop offset="0.5288" stop-color="#ffff00"/><stop offset="0.5367" stop-color="#c8ff16"/><stop offset="0.5434" stop-color="#a8ff2a"/><stop offset="0.5580" stop-color="#9cff2a"/><stop offset="0.6375" stop-color="#64ff1e"/><stop offset="0.6918" stop-color="#28ff14"/><stop offset="0.7462" stop-color="#0af00a"/><stop offset="0.7984" stop-color="#05d705"/><stop offset="0.8528" stop-color="#00be00"/><stop offset="0.9218" stop-color="#00a000"/><stop offset="1.0000" stop-color="#008700"/></linearGradient>
<linearGradient id="h2" gradientUnits="userSpaceOnUse" x1="362.50" y1="268.4" x2="384.32" y2="748.01"><stop offset="0.0000" stop-color="#870000"/><stop offset="0.0398" stop-color="#8c0000"/><stop offset="0.0779" stop-color="#9b0000"/><stop offset="0.1331" stop-color="#b90000"/><stop offset="0.2137" stop-color="#e10000"/><stop offset="0.2964" stop-color="#ff0000"/><stop offset="0.4046" stop-color="#ff2300"/><stop offset="0.5000" stop-color="#ff4000"/><stop offset="0.5064" stop-color="#ff4e00"/><stop offset="0.5128" stop-color="#ff8000"/><stop offset="0.5195" stop-color="#ffbe00"/><stop offset="0.5276" stop-color="#ffff00"/><stop offset="0.5356" stop-color="#c8ff16"/><stop offset="0.5423" stop-color="#a8ff2a"/><stop offset="0.5570" stop-color="#9cff2a"/><stop offset="0.6366" stop-color="#64ff1e"/><stop offset="0.6911" stop-color="#28ff14"/><stop offset="0.7457" stop-color="#0af00a"/><stop offset="0.7981" stop-color="#05d705"/><stop offset="0.8526" stop-color="#00be00"/><stop offset="0.9218" stop-color="#00a000"/><stop offset="1.0000" stop-color="#008700"/></linearGradient>
<linearGradient id="h3" gradientUnits="userSpaceOnUse" x1="375.50" y1="268.4" x2="399.35" y2="747.81"><stop offset="0.0000" stop-color="#870000"/><stop offset="0.0348" stop-color="#8c0000"/><stop offset="0.0732" stop-color="#9b0000"/><stop offset="0.1288" stop-color="#b90000"/><stop offset="0.2100" stop-color="#e10000"/><stop offset="0.2934" stop-color="#ff0000"/><stop offset="0.4024" stop-color="#ff2300"/><stop offset="0.4985" stop-color="#ff4000"/><stop offset="0.5049" stop-color="#ff4e00"/><stop offset="0.5113" stop-color="#ff8000"/><stop offset="0.5182" stop-color="#ffbe00"/><stop offset="0.5263" stop-color="#ffff00"/><stop offset="0.5343" stop-color="#c8ff16"/><stop offset="0.5410" stop-color="#a8ff2a"/><stop offset="0.5558" stop-color="#9cff2a"/><stop offset="0.6357" stop-color="#64ff1e"/><stop offset="0.6904" stop-color="#28ff14"/><stop offset="0.7451" stop-color="#0af00a"/><stop offset="0.7976" stop-color="#05d705"/><stop offset="0.8523" stop-color="#00be00"/><stop offset="0.9217" stop-color="#00a000"/><stop offset="1.0000" stop-color="#008700"/></linearGradient>
<linearGradient id="h4" gradientUnits="userSpaceOnUse" x1="388.50" y1="268.4" x2="414.37" y2="747.60"><stop offset="0.0000" stop-color="#880000"/><stop offset="0.0296" stop-color="#8c0000"/><stop offset="0.0684" stop-color="#9b0000"/><stop offset="0.1244" stop-color="#b90000"/><stop offset="0.2062" stop-color="#e10000"/><stop offset="0.2902" stop-color="#ff0000"/><stop offset="0.4000" stop-color="#ff2300"/><stop offset="0.4969" stop-color="#ff4000"/><stop offset="0.5034" stop-color="#ff4e00"/><stop offset="0.5098" stop-color="#ff8000"/><stop offset="0.5167" stop-color="#ffbe00"/><stop offset="0.5249" stop-color="#ffff00"/><stop offset="0.5329" stop-color="#c8ff16"/><stop offset="0.5397" stop-color="#a8ff2a"/><stop offset="0.5544" stop-color="#9cff2a"/><stop offset="0.6346" stop-color="#64ff1e"/><stop offset="0.6895" stop-color="#28ff14"/><stop offset="0.7443" stop-color="#0af00a"/><stop offset="0.7971" stop-color="#05d705"/><stop offset="0.8519" stop-color="#00be00"/><stop offset="0.9215" stop-color="#00a000"/><stop offset="1.0000" stop-color="#008700"/></linearGradient>
<linearGradient id="h5" gradientUnits="userSpaceOnUse" x1="401.50" y1="268.4" x2="429.39" y2="747.38"><stop offset="0.0000" stop-color="#890000"/><stop offset="0.0244" stop-color="#8c0000"/><stop offset="0.0635" stop-color="#9b0000"/><stop offset="0.1199" stop-color="#b90000"/><stop offset="0.2023" stop-color="#e10000"/><stop offset="0.2869" stop-color="#ff0000"/><stop offset="0.3976" stop-color="#ff2300"/><stop offset="0.4952" stop-color="#ff4000"/><stop offset="0.5017" stop-color="#ff4e00"/><stop offset="0.5082" stop-color="#ff8000"/><stop offset="0.5151" stop-color="#ffbe00"/><stop offset="0.5234" stop-color="#ffff00"/><stop offset="0.5314" stop-color="#c8ff16"/><stop offset="0.5382" stop-color="#a8ff2a"/><stop offset="0.5530" stop-color="#9cff2a"/><stop offset="0.6334" stop-color="#64ff1e"/><stop offset="0.6885" stop-color="#28ff14"/><stop offset="0.7435" stop-color="#0af00a"/><stop offset="0.7964" stop-color="#05d705"/><stop offset="0.8514" stop-color="#00be00"/><stop offset="0.9213" stop-color="#00a000"/><stop offset="1.0000" stop-color="#008700"/></linearGradient>
<linearGradient id="h6" gradientUnits="userSpaceOnUse" x1="414.50" y1="268.4" x2="444.41" y2="747.13"><stop offset="0.0000" stop-color="#8a0000"/><stop offset="0.0191" stop-color="#8c0000"/><stop offset="0.0584" stop-color="#9b0000"/><stop offset="0.1152" stop-color="#b90000"/><stop offset="0.1983" stop-color="#e10000"/><stop offset="0.2835" stop-color="#ff0000"/><stop offset="0.3950" stop-color="#ff2300"/><stop offset="0.4933" stop-color="#ff4000"/><stop offset="0.4999" stop-color="#ff4e00"/><stop offset="0.5065" stop-color="#ff8000"/><stop offset="0.5135" stop-color="#ffbe00"/><stop offset="0.5218" stop-color="#ffff00"/><stop offset="0.5298" stop-color="#c8ff16"/><stop offset="0.5366" stop-color="#a8ff2a"/><stop offset="0.5515" stop-color="#9cff2a"/><stop offset="0.6322" stop-color="#64ff1e"/><stop offset="0.6873" stop-color="#28ff14"/><stop offset="0.7425" stop-color="#0af00a"/><stop offset="0.7956" stop-color="#05d705"/><stop offset="0.8508" stop-color="#00be00"/><stop offset="0.9209" stop-color="#00a000"/><stop offset="1.0000" stop-color="#008700"/></linearGradient>
<linearGradient id="h7" gradientUnits="userSpaceOnUse" x1="427.50" y1="268.4" x2="459.43" y2="746.87"><stop offset="0.0000" stop-color="#8a0000"/><stop offset="0.0136" stop-color="#8c0000"/><stop offset="0.0532" stop-color="#9b0000"/><stop offset="0.1105" stop-color="#b90000"/><stop offset="0.1942" stop-color="#e10000"/><stop offset="0.2800" stop-color="#ff0000"/><stop offset="0.3923" stop-color="#ff2300"/><stop offset="0.4914" stop-color="#ff4000"/><stop offset="0.4980" stop-color="#ff4e00"/><stop offset="0.5046" stop-color="#ff8000"/><stop offset="0.5116" stop-color="#ffbe00"/><stop offset="0.5200" stop-color="#ffff00"/><stop offset="0.5281" stop-color="#c8ff16"/><stop offset="0.5349" stop-color="#a8ff2a"/><stop offset="0.5498" stop-color="#9cff2a"/><stop offset="0.6308" stop-color="#64ff1e"/><stop offset="0.6861" stop-color="#28ff14"/><stop offset="0.7415" stop-color="#0af00a"/><stop offset="0.7947" stop-color="#05d705"/><stop offset="0.8501" stop-color="#00be00"/><stop offset="0.9204" stop-color="#00a000"/><stop offset="1.0000" stop-color="#008700"/></linearGradient>
<linearGradient id="h8" gradientUnits="userSpaceOnUse" x1="440.50" y1="268.4" x2="474.44" y2="746.59"><stop offset="0.0000" stop-color="#8b0000"/><stop offset="0.0080" stop-color="#8c0000"/><stop offset="0.0480" stop-color="#9b0000"/><stop offset="0.1056" stop-color="#b90000"/><stop offset="0.1899" stop-color="#e10000"/><stop offset="0.2764" stop-color="#ff0000"/><stop offset="0.3895" stop-color="#ff2300"/><stop offset="0.4893" stop-color="#ff4000"/><stop offset="0.4960" stop-color="#ff4e00"/><stop offset="0.5026" stop-color="#ff8000"/><stop offset="0.5097" stop-color="#ffbe00"/><stop offset="0.5181" stop-color="#ffff00"/><stop offset="0.5263" stop-color="#c8ff16"/><stop offset="0.5331" stop-color="#a8ff2a"/><stop offset="0.5481" stop-color="#9cff2a"/><stop offset="0.6292" stop-color="#64ff1e"/><stop offset="0.6848" stop-color="#28ff14"/><stop offset="0.7403" stop-color="#0af00a"/><stop offset="0.7937" stop-color="#05d705"/><stop offset="0.8493" stop-color="#00be00"/><stop offset="0.9198" stop-color="#00a000"/><stop offset="1.0000" stop-color="#008700"/></linearGradient>
<linearGradient id="h9" gradientUnits="userSpaceOnUse" x1="453.50" y1="268.4" x2="489.45" y2="746.30"><stop offset="0.0000" stop-color="#8c0000"/><stop offset="0.0023" stop-color="#8c0000"/><stop offset="0.0426" stop-color="#9b0000"/><stop offset="0.1006" stop-color="#b90000"/><stop offset="0.1855" stop-color="#e10000"/><stop offset="0.2727" stop-color="#ff0000"/><stop offset="0.3866" stop-color="#ff2300"/><stop offset="0.4871" stop-color="#ff4000"/><stop offset="0.4938" stop-color="#ff4e00"/><stop offset="0.5005" stop-color="#ff8000"/><stop offset="0.5077" stop-color="#ffbe00"/><stop offset="0.5162" stop-color="#ffff00"/><stop offset="0.5243" stop-color="#c8ff16"/><stop offset="0.5312" stop-color="#a8ff2a"/><stop offset="0.5462" stop-color="#9cff2a"/><stop offset="0.6276" stop-color="#64ff1e"/><stop offset="0.6833" stop-color="#28ff14"/><stop offset="0.7390" stop-color="#0af00a"/><stop offset="0.7926" stop-color="#05d705"/><stop offset="0.8483" stop-color="#00be00"/><stop offset="0.9191" stop-color="#00a000"/><stop offset="1.0000" stop-color="#008700"/></linearGradient>
<linearGradient id="h10" gradientUnits="userSpaceOnUse" x1="466.50" y1="268.4" x2="504.45" y2="745.98"><stop offset="0.0000" stop-color="#8d0000"/><stop offset="0.0370" stop-color="#9b0000"/><stop offset="0.0955" stop-color="#b90000"/><stop offset="0.1811" stop-color="#e10000"/><stop offset="0.2688" stop-color="#ff0000"/><stop offset="0.3836" stop-color="#ff2300"/><stop offset="0.4848" stop-color="#ff4000"/><stop offset="0.4916" stop-color="#ff4e00"/><stop offset="0.4983" stop-color="#ff8000"/><stop offset="0.5055" stop-color="#ffbe00"/><stop offset="0.5141" stop-color="#ffff00"/><stop offset="0.5222" stop-color="#c8ff16"/><stop offset="0.5291" stop-color="#a8ff2a"/><stop offset="0.5442" stop-color="#9cff2a"/><stop offset="0.6259" stop-color="#64ff1e"/><stop offset="0.6818" stop-color="#28ff14"/><stop offset="0.7377" stop-color="#0af00a"/><stop offset="0.7914" stop-color="#05d705"/><stop offset="0.8473" stop-color="#00be00"/><stop offset="0.9182" stop-color="#00a000"/><stop offset="1.0000" stop-color="#008600"/></linearGradient>
<linearGradient id="h11" gradientUnits="userSpaceOnUse" x1="479.50" y1="268.4" x2="519.45" y2="745.66"><stop offset="0.0000" stop-color="#8f0000"/><stop offset="0.0314" stop-color="#9b0000"/><stop offset="0.0903" stop-color="#b90000"/><stop offset="0.1765" stop-color="#e10000"/><stop offset="0.2648" stop-color="#ff0000"/><stop offset="0.3804" stop-color="#ff2300"/><stop offset="0.4824" stop-color="#ff4000"/><stop offset="0.4892" stop-color="#ff4e00"/><stop offset="0.4960" stop-color="#ff8000"/><stop offset="0.5033" stop-color="#ffbe00"/><stop offset="0.5119" stop-color="#ffff00"/><stop offset="0.5201" stop-color="#c8ff16"/><stop offset="0.5270" stop-color="#a8ff2a"/><stop offset="0.5421" stop-color="#9cff2a"/><stop offset="0.6240" stop-color="#64ff1e"/><stop offset="0.6801" stop-color="#28ff14"/><stop offset="0.7362" stop-color="#0af00a"/><stop offset="0.7901" stop-color="#05d705"/><stop offset="0.8462" stop-color="#00be00"/><stop offset="0.9173" stop-color="#00a000"/><stop offset="1.0000" stop-color="#008600"/></linearGradient>
<linearGradient id="h12" gradientUnits="userSpaceOnUse" x1="492.50" y1="268.4" x2="534.45" y2="745.31"><stop offset="0.0000" stop-color="#920000"/><stop offset="0.0257" stop-color="#9b0000"/><stop offset="0.0850" stop-color="#b90000"/><stop offset="0.1717" stop-color="#e10000"/><stop offset="0.2608" stop-color="#ff0000"/><stop offset="0.3772" stop-color="#ff2300"/><stop offset="0.4799" stop-color="#ff4000"/><stop offset="0.4867" stop-color="#ff4e00"/><stop offset="0.4936" stop-color="#ff8000"/><stop offset="0.5009" stop-color="#ffbe00"/><stop offset="0.5095" stop-color="#ffff00"/><stop offset="0.5178" stop-color="#c8ff16"/><stop offset="0.5247" stop-color="#a8ff2a"/><stop offset="0.5398" stop-color="#9cff2a"/><stop offset="0.6221" stop-color="#64ff1e"/><stop offset="0.6783" stop-color="#28ff14"/><stop offset="0.7346" stop-color="#0af00a"/><stop offset="0.7886" stop-color="#05d705"/><stop offset="0.8449" stop-color="#00be00"/><stop offset="0.9163" stop-color="#00a000"/><stop offset="1.0000" stop-color="#008600"/></linearGradient>
<linearGradient id="h13" gradientUnits="userSpaceOnUse" x1="505.50" y1="268.4" x2="549.44" y2="744.95"><stop offset="0.0000" stop-color="#940000"/><stop offset="0.0198" stop-color="#9b0000"/><stop offset="0.0796" stop-color="#b90000"/><stop offset="0.1669" stop-color="#e10000"/><stop offset="0.2566" stop-color="#ff0000"/><stop offset="0.3738" stop-color="#ff2300"/><stop offset="0.4772" stop-color="#ff4000"/><stop offset="0.4841" stop-color="#ff4e00"/><stop offset="0.4910" stop-color="#ff8000"/><stop offset="0.4984" stop-color="#ffbe00"/><stop offset="0.5071" stop-color="#ffff00"/><stop offset="0.5154" stop-color="#c8ff16"/><stop offset="0.5223" stop-color="#a8ff2a"/><stop offset="0.5375" stop-color="#9cff2a"/><stop offset="0.6200" stop-color="#64ff1e"/><stop offset="0.6764" stop-color="#28ff14"/><stop offset="0.7328" stop-color="#0af00a"/><stop offset="0.7871" stop-color="#05d705"/><stop offset="0.8435" stop-color="#00be00"/><stop offset="0.9152" stop-color="#00a000"/><stop offset="1.0000" stop-color="#008600"/></linearGradient>
<linearGradient id="h14" gradientUnits="userSpaceOnUse" x1="518.50" y1="268.4" x2="564.42" y2="744.57"><stop offset="0.0000" stop-color="#960000"/><stop offset="0.0138" stop-color="#9b0000"/><stop offset="0.0740" stop-color="#b90000"/><stop offset="0.1620" stop-color="#e10000"/><stop offset="0.2523" stop-color="#ff0000"/><stop offset="0.3703" stop-color="#ff2300"/><stop offset="0.4745" stop-color="#ff4000"/><stop offset="0.4814" stop-color="#ff4e00"/><stop offset="0.4884" stop-color="#ff8000"/><stop offset="0.4958" stop-color="#ffbe00"/><stop offset="0.5046" stop-color="#ffff00"/><stop offset="0.5128" stop-color="#c8ff16"/><stop offset="0.5198" stop-color="#a8ff2a"/><stop offset="0.5350" stop-color="#9cff2a"/><stop offset="0.6178" stop-color="#64ff1e"/><stop offset="0.6744" stop-color="#28ff14"/><stop offset="0.7310" stop-color="#0af00a"/><stop offset="0.7854" stop-color="#05d705"/><stop offset="0.8421" stop-color="#00be00"/><stop offset="0.9139" stop-color="#00a000"/><stop offset="1.0000" stop-color="#008500"/></linearGradient>
<linearGradient id="h15" gradientUnits="userSpaceOnUse" x1="531.50" y1="268.4" x2="579.41" y2="744.18"><stop offset="0.0000" stop-color="#980000"/><stop offset="0.0078" stop-color="#9b0000"/><stop offset="0.0684" stop-color="#b90000"/><stop offset="0.1569" stop-color="#e10000"/><stop offset="0.2478" stop-color="#ff0000"/><stop offset="0.3667" stop-color="#ff2300"/><stop offset="0.4716" stop-color="#ff4000"/><stop offset="0.4786" stop-color="#ff4e00"/><stop offset="0.4856" stop-color="#ff8000"/><stop offset="0.4930" stop-color="#ffbe00"/><stop offset="0.5019" stop-color="#ffff00"/><stop offset="0.5102" stop-color="#c8ff16"/><stop offset="0.5172" stop-color="#a8ff2a"/><stop offset="0.5325" stop-color="#9cff2a"/><stop offset="0.6155" stop-color="#64ff1e"/><stop offset="0.6723" stop-color="#28ff14"/><stop offset="0.7291" stop-color="#0af00a"/><stop offset="0.7837" stop-color="#05d705"/><stop offset="0.8405" stop-color="#00be00"/><stop offset="0.9126" stop-color="#00a000"/><stop offset="1.0000" stop-color="#008500"/></linearGradient>
<linearGradient id="h16" gradientUnits="userSpaceOnUse" x1="544.50" y1="268.4" x2="594.38" y2="743.77"><stop offset="0.0000" stop-color="#9a0000"/><stop offset="0.0016" stop-color="#9b0000"/><stop offset="0.0626" stop-color="#b90000"/><stop offset="0.1518" stop-color="#e10000"/><stop offset="0.2433" stop-color="#ff0000"/><stop offset="0.3630" stop-color="#ff2300"/><stop offset="0.4686" stop-color="#ff4000"/><stop offset="0.4756" stop-color="#ff4e00"/><stop offset="0.4827" stop-color="#ff8000"/><stop offset="0.4902" stop-color="#ffbe00"/><stop offset="0.4991" stop-color="#ffff00"/><stop offset="0.5074" stop-color="#c8ff16"/><stop offset="0.5145" stop-color="#a8ff2a"/><stop offset="0.5298" stop-color="#9cff2a"/><stop offset="0.6131" stop-color="#64ff1e"/><stop offset="0.6700" stop-color="#28ff14"/><stop offset="0.7270" stop-color="#0af00a"/><stop offset="0.7818" stop-color="#05d705"/><stop offset="0.8388" stop-color="#00be00"/><stop offset="0.9111" stop-color="#00a000"/><stop offset="1.0000" stop-color="#008500"/></linearGradient>
<linearGradient id="h17" gradientUnits="userSpaceOnUse" x1="557.50" y1="268.4" x2="609.35" y2="743.34"><stop offset="0.0000" stop-color="#9d0000"/><stop offset="0.0567" stop-color="#b90000"/><stop offset="0.1465" stop-color="#e10000"/><stop offset="0.2386" stop-color="#ff0000"/><stop offset="0.3592" stop-color="#ff2300"/><stop offset="0.4655" stop-color="#ff4000"/><stop offset="0.4726" stop-color="#ff4e00"/><stop offset="0.4797" stop-color="#ff8000"/><stop offset="0.4872" stop-color="#ffbe00"/><stop offset="0.4962" stop-color="#ffff00"/><stop offset="0.5046" stop-color="#c8ff16"/><stop offset="0.5116" stop-color="#a8ff2a"/><stop offset="0.5270" stop-color="#9cff2a"/><stop offset="0.6105" stop-color="#64ff1e"/><stop offset="0.6677" stop-color="#28ff14"/><stop offset="0.7249" stop-color="#0af00a"/><stop offset="0.7798" stop-color="#05d705"/><stop offset="0.8370" stop-color="#00be00"/><stop offset="0.9095" stop-color="#00a000"/><stop offset="1.0000" stop-color="#008400"/></linearGradient>
<linearGradient id="h18" gradientUnits="userSpaceOnUse" x1="570.50" y1="268.4" x2="624.32" y2="742.90"><stop offset="0.0000" stop-color="#a00000"/><stop offset="0.0507" stop-color="#b90000"/><stop offset="0.1411" stop-color="#e10000"/><stop offset="0.2339" stop-color="#ff0000"/><stop offset="0.3552" stop-color="#ff2300"/><stop offset="0.4623" stop-color="#ff4000"/><stop offset="0.4694" stop-color="#ff4e00"/><stop offset="0.4766" stop-color="#ff8000"/><stop offset="0.4842" stop-color="#ffbe00"/><stop offset="0.4932" stop-color="#ffff00"/><stop offset="0.5016" stop-color="#c8ff16"/><stop offset="0.5086" stop-color="#a8ff2a"/><stop offset="0.5241" stop-color="#9cff2a"/><stop offset="0.6079" stop-color="#64ff1e"/><stop offset="0.6652" stop-color="#28ff14"/><stop offset="0.7226" stop-color="#0af00a"/><stop offset="0.7777" stop-color="#05d705"/><stop offset="0.8351" stop-color="#00be00"/><stop offset="0.9079" stop-color="#00a000"/><stop offset="1.0000" stop-color="#008400"/></linearGradient>
<linearGradient id="h19" gradientUnits="userSpaceOnUse" x1="583.50" y1="268.4" x2="639.28" y2="742.44"><stop offset="0.0000" stop-color="#a40000"/><stop offset="0.0445" stop-color="#b90000"/><stop offset="0.1356" stop-color="#e10000"/><stop offset="0.2290" stop-color="#ff0000"/><stop offset="0.3511" stop-color="#ff2300"/><stop offset="0.4589" stop-color="#ff4000"/><stop offset="0.4661" stop-color="#ff4e00"/><stop offset="0.4733" stop-color="#ff8000"/><stop offset="0.4810" stop-color="#ffbe00"/><stop offset="0.4901" stop-color="#ffff00"/><stop offset="0.4985" stop-color="#c8ff16"/><stop offset="0.5056" stop-color="#a8ff2a"/><stop offset="0.5211" stop-color="#9cff2a"/><stop offset="0.6051" stop-color="#64ff1e"/><stop offset="0.6627" stop-color="#28ff14"/><stop offset="0.7202" stop-color="#0af00a"/><stop offset="0.7755" stop-color="#05d705"/><stop offset="0.8331" stop-color="#00be00"/><stop offset="0.9061" stop-color="#00a000"/><stop offset="1.0000" stop-color="#008300"/></linearGradient>
<linearGradient id="h20" gradientUnits="userSpaceOnUse" x1="596.50" y1="268.4" x2="654.24" y2="741.96"><stop offset="0.0000" stop-color="#a70000"/><stop offset="0.0383" stop-color="#b90000"/><stop offset="0.1299" stop-color="#e10000"/><stop offset="0.2240" stop-color="#ff0000"/><stop offset="0.3470" stop-color="#ff2300"/><stop offset="0.4555" stop-color="#ff4000"/><stop offset="0.4627" stop-color="#ff4e00"/><stop offset="0.4700" stop-color="#ff8000"/><stop offset="0.4777" stop-color="#ffbe00"/><stop offset="0.4868" stop-color="#ffff00"/><stop offset="0.4953" stop-color="#c8ff16"/><stop offset="0.5024" stop-color="#a8ff2a"/><stop offset="0.5179" stop-color="#9cff2a"/><stop offset="0.6023" stop-color="#64ff1e"/><stop offset="0.6600" stop-color="#28ff14"/><stop offset="0.7177" stop-color="#0af00a"/><stop offset="0.7732" stop-color="#05d705"/><stop offset="0.8310" stop-color="#00be00"/><stop offset="0.9042" stop-color="#00a000"/><stop offset="1.0000" stop-color="#008300"/></linearGradient>
<linearGradient id="h21" gradientUnits="userSpaceOnUse" x1="609.50" y1="268.4" x2="669.18" y2="741.47"><stop offset="0.0000" stop-color="#aa0000"/><stop offset="0.0319" stop-color="#b90000"/><stop offset="0.1242" stop-color="#e10000"/><stop offset="0.2189" stop-color="#ff0000"/><stop offset="0.3427" stop-color="#ff2300"/><stop offset="0.4519" stop-color="#ff4000"/><stop offset="0.4592" stop-color="#ff4e00"/><stop offset="0.4665" stop-color="#ff8000"/><stop offset="0.4743" stop-color="#ffbe00"/><stop offset="0.4835" stop-color="#ffff00"/><stop offset="0.4920" stop-color="#c8ff16"/><stop offset="0.4991" stop-color="#a8ff2a"/><stop offset="0.5147" stop-color="#9cff2a"/><stop offset="0.5993" stop-color="#64ff1e"/><stop offset="0.6572" stop-color="#28ff14"/><stop offset="0.7151" stop-color="#0af00a"/><stop offset="0.7708" stop-color="#05d705"/><stop offset="0.8287" stop-color="#00be00"/><stop offset="0.9022" stop-color="#00a000"/><stop offset="1.0000" stop-color="#008200"/></linearGradient>
<linearGradient id="h22" gradientUnits="userSpaceOnUse" x1="622.50" y1="268.4" x2="684.13" y2="740.96"><stop offset="0.0000" stop-color="#ad0000"/><stop offset="0.0255" stop-color="#b90000"/><stop offset="0.1183" stop-color="#e10000"/><stop offset="0.2136" stop-color="#ff0000"/><stop offset="0.3383" stop-color="#ff2300"/><stop offset="0.4482" stop-color="#ff4000"/><stop offset="0.4556" stop-color="#ff4e00"/><stop offset="0.4629" stop-color="#ff8000"/><stop offset="0.4707" stop-color="#ffbe00"/><stop offset="0.4800" stop-color="#ffff00"/><stop offset="0.4885" stop-color="#c8ff16"/><stop offset="0.4957" stop-color="#a8ff2a"/><stop offset="0.5113" stop-color="#9cff2a"/><stop offset="0.5962" stop-color="#64ff1e"/><stop offset="0.6543" stop-color="#28ff14"/><stop offset="0.7124" stop-color="#0af00a"/><stop offset="0.7683" stop-color="#05d705"/><stop offset="0.8264" stop-color="#00be00"/><stop offset="0.9001" stop-color="#00a000"/><stop offset="1.0000" stop-color="#008200"/></linearGradient>
<linearGradient id="h23" gradientUnits="userSpaceOnUse" x1="635.50" y1="268.4" x2="699.06" y2="740.44"><stop offset="0.0000" stop-color="#b00000"/><stop offset="0.0189" stop-color="#b90000"/><stop offset="0.1124" stop-color="#e10000"/><stop offset="0.2083" stop-color="#ff0000"/><stop offset="0.3338" stop-color="#ff2300"/><stop offset="0.4445" stop-color="#ff4000"/><stop offset="0.4518" stop-color="#ff4e00"/><stop offset="0.4592" stop-color="#ff8000"/><stop offset="0.4671" stop-color="#ffbe00"/><stop offset="0.4764" stop-color="#ffff00"/><stop offset="0.4850" stop-color="#c8ff16"/><stop offset="0.4921" stop-color="#a8ff2a"/><stop offset="0.5078" stop-color="#9cff2a"/><stop offset="0.5930" stop-color="#64ff1e"/><stop offset="0.6513" stop-color="#28ff14"/><stop offset="0.7096" stop-color="#0af00a"/><stop offset="0.7657" stop-color="#05d705"/><stop offset="0.8239" stop-color="#00be00"/><stop offset="0.8979" stop-color="#00a000"/><stop offset="1.0000" stop-color="#008100"/></linearGradient>
<linearGradient id="h24" gradientUnits="userSpaceOnUse" x1="648.50" y1="268.4" x2="713.99" y2="739.90"><stop offset="0.0000" stop-color="#b30000"/><stop offset="0.0122" stop-color="#b90000"/><stop offset="0.1063" stop-color="#e10000"/><stop offset="0.2028" stop-color="#ff0000"/><stop offset="0.3291" stop-color="#ff2300"/><stop offset="0.4405" stop-color="#ff4000"/><stop offset="0.4480" stop-color="#ff4e00"/><stop offset="0.4554" stop-color="#ff8000"/><stop offset="0.4633" stop-color="#ffbe00"/><stop offset="0.4727" stop-color="#ffff00"/><stop offset="0.4813" stop-color="#c8ff16"/><stop offset="0.4885" stop-color="#a8ff2a"/><stop offset="0.5042" stop-color="#9cff2a"/><stop offset="0.5897" stop-color="#64ff1e"/><stop offset="0.6482" stop-color="#28ff14"/><stop offset="0.7067" stop-color="#0af00a"/><stop offset="0.7629" stop-color="#05d705"/><stop offset="0.8214" stop-color="#00be00"/><stop offset="0.8956" stop-color="#00a000"/><stop offset="1.0000" stop-color="#008100"/></linearGradient>
<linearGradient id="h25" gradientUnits="userSpaceOnUse" x1="661.50" y1="268.4" x2="728.91" y2="739.35"><stop offset="0.0000" stop-color="#b70000"/><stop offset="0.0054" stop-color="#b90000"/><stop offset="0.1001" stop-color="#e10000"/><stop offset="0.1973" stop-color="#ff0000"/><stop offset="0.3244" stop-color="#ff2300"/><stop offset="0.4365" stop-color="#ff4000"/><stop offset="0.4440" stop-color="#ff4e00"/><stop offset="0.4515" stop-color="#ff8000"/><stop offset="0.4594" stop-color="#ffbe00"/><stop offset="0.4689" stop-color="#ffff00"/><stop offset="0.4775" stop-color="#c8ff16"/><stop offset="0.4847" stop-color="#a8ff2a"/><stop offset="0.5005" stop-color="#9cff2a"/><stop offset="0.5863" stop-color="#64ff1e"/><stop offset="0.6450" stop-color="#28ff14"/><stop offset="0.7036" stop-color="#0af00a"/><stop offset="0.7601" stop-color="#05d705"/><stop offset="0.8187" stop-color="#00be00"/><stop offset="0.8932" stop-color="#00a000"/><stop offset="1.0000" stop-color="#008000"/></linearGradient>
<linearGradient id="h26" gradientUnits="userSpaceOnUse" x1="674.50" y1="268.4" x2="743.83" y2="738.78"><stop offset="0.0000" stop-color="#ba0000"/><stop offset="0.0938" stop-color="#e10000"/><stop offset="0.1916" stop-color="#ff0000"/><stop offset="0.3195" stop-color="#ff2300"/><stop offset="0.4324" stop-color="#ff4000"/><stop offset="0.4399" stop-color="#ff4e00"/><stop offset="0.4474" stop-color="#ff8000"/><stop offset="0.4555" stop-color="#ffbe00"/><stop offset="0.4650" stop-color="#ffff00"/><stop offset="0.4736" stop-color="#c8ff16"/><stop offset="0.4808" stop-color="#a8ff2a"/><stop offset="0.4967" stop-color="#9cff2a"/><stop offset="0.5827" stop-color="#64ff1e"/><stop offset="0.6416" stop-color="#28ff14"/><stop offset="0.7005" stop-color="#0af00a"/><stop offset="0.7571" stop-color="#05d705"/><stop offset="0.8160" stop-color="#00be00"/><stop offset="0.8907" stop-color="#00a000"/><stop offset="1.0000" stop-color="#008000"/></linearGradient>
<linearGradient id="h27" gradientUnits="userSpaceOnUse" x1="687.50" y1="268.4" x2="758.74" y2="738.20"><stop offset="0.0000" stop-color="#bd0000"/><stop offset="0.0873" stop-color="#e10000"/><stop offset="0.1858" stop-color="#ff0000"/><stop offset="0.3145" stop-color="#ff2300"/><stop offset="0.4281" stop-color="#ff4000"/><stop offset="0.4357" stop-color="#ff4e00"/><stop offset="0.4433" stop-color="#ff8000"/><stop offset="0.4514" stop-color="#ffbe00"/><stop offset="0.4609" stop-color="#ffff00"/><stop offset="0.4696" stop-color="#c8ff16"/><stop offset="0.4768" stop-color="#a8ff2a"/><stop offset="0.4928" stop-color="#9cff2a"/><stop offset="0.5791" stop-color="#64ff1e"/><stop offset="0.6382" stop-color="#28ff14"/><stop offset="0.6972" stop-color="#0af00a"/><stop offset="0.7540" stop-color="#05d705"/><stop offset="0.8131" stop-color="#00be00"/><stop offset="0.8881" stop-color="#00a000"/><stop offset="1.0000" stop-color="#007f00"/></linearGradient>
<linearGradient id="h28" gradientUnits="userSpaceOnUse" x1="700.50" y1="268.4" x2="773.64" y2="737.60"><stop offset="0.0000" stop-color="#c00000"/><stop offset="0.0808" stop-color="#e10000"/><stop offset="0.1799" stop-color="#ff0000"/><stop offset="0.3094" stop-color="#ff2300"/><stop offset="0.4238" stop-color="#ff4000"/><stop offset="0.4314" stop-color="#ff4e00"/><stop offset="0.4390" stop-color="#ff8000"/><stop offset="0.4471" stop-color="#ffbe00"/><stop offset="0.4568" stop-color="#ffff00"/><stop offset="0.4654" stop-color="#c8ff16"/><stop offset="0.4727" stop-color="#a8ff2a"/><stop offset="0.4887" stop-color="#9cff2a"/><stop offset="0.5753" stop-color="#64ff1e"/><stop offset="0.6346" stop-color="#28ff14"/><stop offset="0.6939" stop-color="#0af00a"/><stop offset="0.7509" stop-color="#05d705"/><stop offset="0.8101" stop-color="#00be00"/><stop offset="0.8854" stop-color="#00a000"/><stop offset="1.0000" stop-color="#007e00"/></linearGradient>
<linearGradient id="h29" gradientUnits="userSpaceOnUse" x1="713.50" y1="268.4" x2="788.53" y2="736.98"><stop offset="0.0000" stop-color="#c20000"/><stop offset="0.0741" stop-color="#e10000"/><stop offset="0.1738" stop-color="#ff0000"/><stop offset="0.3042" stop-color="#ff2300"/><stop offset="0.4193" stop-color="#ff4000"/><stop offset="0.4269" stop-color="#ff4e00"/><stop offset="0.4346" stop-color="#ff8000"/><stop offset="0.4428" stop-color="#ffbe00"/><stop offset="0.4525" stop-color="#ffff00"/><stop offset="0.4612" stop-color="#c8ff16"/><stop offset="0.4685" stop-color="#a8ff2a"/><stop offset="0.4845" stop-color="#9cff2a"/><stop offset="0.5714" stop-color="#64ff1e"/><stop offset="0.6309" stop-color="#28ff14"/><stop offset="0.6904" stop-color="#0af00a"/><stop offset="0.7476" stop-color="#05d705"/><stop offset="0.8070" stop-color="#00be00"/><stop offset="0.8825" stop-color="#00a000"/><stop offset="1.0000" stop-color="#007d00"/></linearGradient>
<linearGradient id="h30" gradientUnits="userSpaceOnUse" x1="726.50" y1="268.4" x2="803.42" y2="736.36"><stop offset="0.0000" stop-color="#c50000"/><stop offset="0.0673" stop-color="#e10000"/><stop offset="0.1677" stop-color="#ff0000"/><stop offset="0.2989" stop-color="#ff2300"/><stop offset="0.4147" stop-color="#ff4000"/><stop offset="0.4224" stop-color="#ff4e00"/><stop offset="0.4301" stop-color="#ff8000"/><stop offset="0.4383" stop-color="#ffbe00"/><stop offset="0.4481" stop-color="#ffff00"/><stop offset="0.4568" stop-color="#c8ff16"/><stop offset="0.4642" stop-color="#a8ff2a"/><stop offset="0.4803" stop-color="#9cff2a"/><stop offset="0.5675" stop-color="#64ff1e"/><stop offset="0.6271" stop-color="#28ff14"/><stop offset="0.6868" stop-color="#0af00a"/><stop offset="0.7442" stop-color="#05d705"/><stop offset="0.8038" stop-color="#00be00"/><stop offset="0.8796" stop-color="#00a000"/><stop offset="0.9989" stop-color="#007d00"/><stop offset="1.0000" stop-color="#007d00"/></linearGradient>
<linearGradient id="h31" gradientUnits="userSpaceOnUse" x1="739.50" y1="268.4" x2="818.30" y2="735.71"><stop offset="0.0000" stop-color="#c80000"/><stop offset="0.0604" stop-color="#e10000"/><stop offset="0.1614" stop-color="#ff0000"/><stop offset="0.2935" stop-color="#ff2300"/><stop offset="0.4100" stop-color="#ff4000"/><stop offset="0.4177" stop-color="#ff4e00"/><stop offset="0.4255" stop-color="#ff8000"/><stop offset="0.4338" stop-color="#ffbe00"/><stop offset="0.4436" stop-color="#ffff00"/><stop offset="0.4524" stop-color="#c8ff16"/><stop offset="0.4597" stop-color="#a8ff2a"/><stop offset="0.4759" stop-color="#9cff2a"/><stop offset="0.5634" stop-color="#64ff1e"/><stop offset="0.6232" stop-color="#28ff14"/><stop offset="0.6831" stop-color="#0af00a"/><stop offset="0.7407" stop-color="#05d705"/><stop offset="0.8005" stop-color="#00be00"/><stop offset="0.8765" stop-color="#00a000"/><stop offset="0.9963" stop-color="#007d00"/><stop offset="1.0000" stop-color="#007c00"/></linearGradient>
<linearGradient id="h32" gradientUnits="userSpaceOnUse" x1="752.50" y1="268.4" x2="833.17" y2="735.06"><stop offset="0.0000" stop-color="#cb0000"/><stop offset="0.0534" stop-color="#e10000"/><stop offset="0.1550" stop-color="#ff0000"/><stop offset="0.2879" stop-color="#ff2300"/><stop offset="0.4051" stop-color="#ff4000"/><stop offset="0.4129" stop-color="#ff4e00"/><stop offset="0.4208" stop-color="#ff8000"/><stop offset="0.4291" stop-color="#ffbe00"/><stop offset="0.4390" stop-color="#ffff00"/><stop offset="0.4478" stop-color="#c8ff16"/><stop offset="0.4552" stop-color="#a8ff2a"/><stop offset="0.4713" stop-color="#9cff2a"/><stop offset="0.5592" stop-color="#64ff1e"/><stop offset="0.6192" stop-color="#28ff14"/><stop offset="0.6793" stop-color="#0af00a"/><stop offset="0.7371" stop-color="#05d705"/><stop offset="0.7971" stop-color="#00be00"/><stop offset="0.8734" stop-color="#00a000"/><stop offset="0.9935" stop-color="#007d00"/><stop offset="1.0000" stop-color="#007c00"/></linearGradient>
<linearGradient id="h33" gradientUnits="userSpaceOnUse" x1="765.50" y1="268.4" x2="848.03" y2="734.38"><stop offset="0.0000" stop-color="#ce0000"/><stop offset="0.0463" stop-color="#e10000"/><stop offset="0.1485" stop-color="#ff0000"/><stop offset="0.2822" stop-color="#ff2300"/><stop offset="0.4002" stop-color="#ff4000"/><stop offset="0.4081" stop-color="#ff4e00"/><stop offset="0.4159" stop-color="#ff8000"/><stop offset="0.4243" stop-color="#ffbe00"/><stop offset="0.4343" stop-color="#ffff00"/><stop offset="0.4431" stop-color="#c8ff16"/><stop offset="0.4505" stop-color="#a8ff2a"/><stop offset="0.4667" stop-color="#9cff2a"/><stop offset="0.5548" stop-color="#64ff1e"/><stop offset="0.6151" stop-color="#28ff14"/><stop offset="0.6754" stop-color="#0af00a"/><stop offset="0.7334" stop-color="#05d705"/><stop offset="0.7936" stop-color="#00be00"/><stop offset="0.8701" stop-color="#00a000"/><stop offset="0.9907" stop-color="#007d00"/><stop offset="1.0000" stop-color="#007c00"/></linearGradient>
<linearGradient id="h34" gradientUnits="userSpaceOnUse" x1="778.50" y1="268.4" x2="862.89" y2="733.70"><stop offset="0.0000" stop-color="#d10000"/><stop offset="0.0391" stop-color="#e10000"/><stop offset="0.1419" stop-color="#ff0000"/><stop offset="0.2764" stop-color="#ff2300"/><stop offset="0.3951" stop-color="#ff4000"/><stop offset="0.4030" stop-color="#ff4e00"/><stop offset="0.4110" stop-color="#ff8000"/><stop offset="0.4194" stop-color="#ffbe00"/><stop offset="0.4294" stop-color="#ffff00"/><stop offset="0.4383" stop-color="#c8ff16"/><stop offset="0.4457" stop-color="#a8ff2a"/><stop offset="0.4620" stop-color="#9cff2a"/><stop offset="0.5504" stop-color="#64ff1e"/><stop offset="0.6109" stop-color="#28ff14"/><stop offset="0.6714" stop-color="#0af00a"/><stop offset="0.7295" stop-color="#05d705"/><stop offset="0.7900" stop-color="#00be00"/><stop offset="0.8668" stop-color="#00a000"/><stop offset="0.9878" stop-color="#007d00"/><stop offset="1.0000" stop-color="#007b00"/></linearGradient>
<linearGradient id="h35" gradientUnits="userSpaceOnUse" x1="791.50" y1="268.4" x2="877.73" y2="733.00"><stop offset="0.0000" stop-color="#d40000"/><stop offset="0.0317" stop-color="#e10000"/><stop offset="0.1352" stop-color="#ff0000"/><stop offset="0.2705" stop-color="#ff2300"/><stop offset="0.3900" stop-color="#ff4000"/><stop offset="0.3979" stop-color="#ff4e00"/><stop offset="0.4059" stop-color="#ff8000"/><stop offset="0.4144" stop-color="#ffbe00"/><stop offset="0.4245" stop-color="#ffff00"/><stop offset="0.4333" stop-color="#c8ff16"/><stop offset="0.4408" stop-color="#a8ff2a"/><stop offset="0.4571" stop-color="#9cff2a"/><stop offset="0.5458" stop-color="#64ff1e"/><stop offset="0.6065" stop-color="#28ff14"/><stop offset="0.6672" stop-color="#0af00a"/><stop offset="0.7256" stop-color="#05d705"/><stop offset="0.7863" stop-color="#00be00"/><stop offset="0.8633" stop-color="#00a000"/><stop offset="0.9847" stop-color="#007d00"/><stop offset="1.0000" stop-color="#007b00"/></linearGradient>
<linearGradient id="h36" gradientUnits="userSpaceOnUse" x1="804.50" y1="268.4" x2="892.57" y2="732.28"><stop offset="0.0000" stop-color="#d70000"/><stop offset="0.0243" stop-color="#e10000"/><stop offset="0.1284" stop-color="#ff0000"/><stop offset="0.2645" stop-color="#ff2300"/><stop offset="0.3847" stop-color="#ff4000"/><stop offset="0.3927" stop-color="#ff4e00"/><stop offset="0.4007" stop-color="#ff8000"/><stop offset="0.4092" stop-color="#ffbe00"/><stop offset="0.4194" stop-color="#ffff00"/><stop offset="0.4283" stop-color="#c8ff16"/><stop offset="0.4358" stop-color="#a8ff2a"/><stop offset="0.4522" stop-color="#9cff2a"/><stop offset="0.5412" stop-color="#64ff1e"/><stop offset="0.6021" stop-color="#28ff14"/><stop offset="0.6630" stop-color="#0af00a"/><stop offset="0.7216" stop-color="#05d705"/><stop offset="0.7825" stop-color="#00be00"/><stop offset="0.8598" stop-color="#00a000"/><stop offset="0.9816" stop-color="#007d00"/><stop offset="1.0000" stop-color="#007a00"/></linearGradient>
<linearGradient id="h37" gradientUnits="userSpaceOnUse" x1="817.50" y1="268.4" x2="907.40" y2="731.55"><stop offset="0.0000" stop-color="#da0000"/><stop offset="0.0167" stop-color="#e10000"/><stop offset="0.1214" stop-color="#ff0000"/><stop offset="0.2584" stop-color="#ff2300"/><stop offset="0.3793" stop-color="#ff4000"/><stop offset="0.3873" stop-color="#ff4e00"/><stop offset="0.3954" stop-color="#ff8000"/><stop offset="0.4040" stop-color="#ffbe00"/><stop offset="0.4142" stop-color="#ffff00"/><stop offset="0.4231" stop-color="#c8ff16"/><stop offset="0.4306" stop-color="#a8ff2a"/><stop offset="0.4471" stop-color="#9cff2a"/><stop offset="0.5364" stop-color="#64ff1e"/><stop offset="0.5975" stop-color="#28ff14"/><stop offset="0.6586" stop-color="#0af00a"/><stop offset="0.7174" stop-color="#05d705"/><stop offset="0.7785" stop-color="#00be00"/><stop offset="0.8561" stop-color="#00a000"/><stop offset="0.9783" stop-color="#007d00"/><stop offset="1.0000" stop-color="#007a00"/></linearGradient>
<linearGradient id="h38" gradientUnits="userSpaceOnUse" x1="830.50" y1="268.4" x2="922.21" y2="730.81"><stop offset="0.0000" stop-color="#de0000"/><stop offset="0.0090" stop-color="#e10000"/><stop offset="0.1144" stop-color="#ff0000"/><stop offset="0.2522" stop-color="#ff2300"/><stop offset="0.3738" stop-color="#ff4000"/><stop offset="0.3819" stop-color="#ff4e00"/><stop offset="0.3900" stop-color="#ff8000"/><stop offset="0.3986" stop-color="#ffbe00"/><stop offset="0.4089" stop-color="#ffff00"/><stop offset="0.4178" stop-color="#c8ff16"/><stop offset="0.4254" stop-color="#a8ff2a"/><stop offset="0.4419" stop-color="#9cff2a"/><stop offset="0.5315" stop-color="#64ff1e"/><stop offset="0.5929" stop-color="#28ff14"/><stop offset="0.6542" stop-color="#0af00a"/><stop offset="0.7132" stop-color="#05d705"/><stop offset="0.7745" stop-color="#00be00"/><stop offset="0.8523" stop-color="#00a000"/><stop offset="0.9750" stop-color="#007d00"/><stop offset="1.0000" stop-color="#007900"/></linearGradient>
<linearGradient id="h39" gradientUnits="userSpaceOnUse" x1="843.50" y1="268.4" x2="937.02" y2="730.05"><stop offset="0.0000" stop-color="#e10000"/><stop offset="0.0012" stop-color="#e10000"/><stop offset="0.1072" stop-color="#ff0000"/><stop offset="0.2458" stop-color="#ff2300"/><stop offset="0.3681" stop-color="#ff4000"/><stop offset="0.3763" stop-color="#ff4e00"/><stop offset="0.3844" stop-color="#ff8000"/><stop offset="0.3931" stop-color="#ffbe00"/><stop offset="0.4035" stop-color="#ffff00"/><stop offset="0.4124" stop-color="#c8ff16"/><stop offset="0.4200" stop-color="#a8ff2a"/><stop offset="0.4366" stop-color="#9cff2a"/><stop offset="0.5265" stop-color="#64ff1e"/><stop offset="0.5881" stop-color="#28ff14"/><stop offset="0.6496" stop-color="#0af00a"/><stop offset="0.7088" stop-color="#05d705"/><stop offset="0.7703" stop-color="#00be00"/><stop offset="0.8484" stop-color="#00a000"/><stop offset="0.9715" stop-color="#007d00"/><stop offset="1.0000" stop-color="#007900"/></linearGradient>
<linearGradient id="h40" gradientUnits="userSpaceOnUse" x1="856.50" y1="268.4" x2="951.83" y2="729.28"><stop offset="0.0000" stop-color="#e30000"/><stop offset="0.0999" stop-color="#ff0000"/><stop offset="0.2393" stop-color="#ff2300"/><stop offset="0.3624" stop-color="#ff4000"/><stop offset="0.3706" stop-color="#ff4e00"/><stop offset="0.3788" stop-color="#ff8000"/><stop offset="0.3875" stop-color="#ffbe00"/><stop offset="0.3979" stop-color="#ffff00"/><stop offset="0.4069" stop-color="#c8ff16"/><stop offset="0.4145" stop-color="#a8ff2a"/><stop offset="0.4312" stop-color="#9cff2a"/><stop offset="0.5214" stop-color="#64ff1e"/><stop offset="0.5832" stop-color="#28ff14"/><stop offset="0.6449" stop-color="#0af00a"/><stop offset="0.7043" stop-color="#05d705"/><stop offset="0.7661" stop-color="#00be00"/><stop offset="0.8445" stop-color="#00a000"/><stop offset="0.9680" stop-color="#007d00"/><stop offset="1.0000" stop-color="#007900"/></linearGradient>
<linearGradient id="h41" gradientUnits="userSpaceOnUse" x1="869.50" y1="268.4" x2="966.62" y2="728.50"><stop offset="0.0000" stop-color="#e50000"/><stop offset="0.0925" stop-color="#ff0000"/><stop offset="0.2327" stop-color="#ff2300"/><stop offset="0.3565" stop-color="#ff4000"/><stop offset="0.3648" stop-color="#ff4e00"/><stop offset="0.3730" stop-color="#ff8000"/><stop offset="0.3818" stop-color="#ffbe00"/><stop offset="0.3923" stop-color="#ffff00"/><stop offset="0.4013" stop-color="#c8ff16"/><stop offset="0.4089" stop-color="#a8ff2a"/><stop offset="0.4256" stop-color="#9cff2a"/><stop offset="0.5162" stop-color="#64ff1e"/><stop offset="0.5782" stop-color="#28ff14"/><stop offset="0.6402" stop-color="#0af00a"/><stop offset="0.6997" stop-color="#05d705"/><stop offset="0.7617" stop-color="#00be00"/><stop offset="0.8404" stop-color="#00a000"/><stop offset="0.9643" stop-color="#007d00"/><stop offset="1.0000" stop-color="#007800"/></linearGradient>
<linearGradient id="h42" gradientUnits="userSpaceOnUse" x1="882.50" y1="268.4" x2="981.40" y2="727.70"><stop offset="0.0000" stop-color="#e70000"/><stop offset="0.0849" stop-color="#ff0000"/><stop offset="0.2260" stop-color="#ff2300"/><stop offset="0.3505" stop-color="#ff4000"/><stop offset="0.3588" stop-color="#ff4e00"/><stop offset="0.3671" stop-color="#ff8000"/><stop offset="0.3760" stop-color="#ffbe00"/><stop offset="0.3865" stop-color="#ffff00"/><stop offset="0.3956" stop-color="#c8ff16"/><stop offset="0.4032" stop-color="#a8ff2a"/><stop offset="0.4200" stop-color="#9cff2a"/><stop offset="0.5109" stop-color="#64ff1e"/><stop offset="0.5731" stop-color="#28ff14"/><stop offset="0.6353" stop-color="#0af00a"/><stop offset="0.6951" stop-color="#05d705"/><stop offset="0.7572" stop-color="#00be00"/><stop offset="0.8362" stop-color="#00a000"/><stop offset="0.9606" stop-color="#007d00"/><stop offset="1.0000" stop-color="#007800"/></linearGradient>
<linearGradient id="h43" gradientUnits="userSpaceOnUse" x1="895.50" y1="268.4" x2="996.17" y2="726.90"><stop offset="0.0000" stop-color="#ea0000"/><stop offset="0.0773" stop-color="#ff0000"/><stop offset="0.2192" stop-color="#ff2300"/><stop offset="0.3444" stop-color="#ff4000"/><stop offset="0.3528" stop-color="#ff4e00"/><stop offset="0.3611" stop-color="#ff8000"/><stop offset="0.3700" stop-color="#ffbe00"/><stop offset="0.3806" stop-color="#ffff00"/><stop offset="0.3897" stop-color="#c8ff16"/><stop offset="0.3974" stop-color="#a8ff2a"/><stop offset="0.4142" stop-color="#9cff2a"/><stop offset="0.5054" stop-color="#64ff1e"/><stop offset="0.5678" stop-color="#28ff14"/><stop offset="0.6303" stop-color="#0af00a"/><stop offset="0.6903" stop-color="#05d705"/><stop offset="0.7527" stop-color="#00be00"/><stop offset="0.8319" stop-color="#00a000"/><stop offset="0.9567" stop-color="#007d00"/><stop offset="1.0000" stop-color="#007700"/></linearGradient>
<linearGradient id="h44" gradientUnits="userSpaceOnUse" x1="908.50" y1="268.4" x2="1010.93" y2="726.07"><stop offset="0.0000" stop-color="#ec0000"/><stop offset="0.0696" stop-color="#ff0000"/><stop offset="0.2123" stop-color="#ff2300"/><stop offset="0.3382" stop-color="#ff4000"/><stop offset="0.3466" stop-color="#ff4e00"/><stop offset="0.3550" stop-color="#ff8000"/><stop offset="0.3640" stop-color="#ffbe00"/><stop offset="0.3746" stop-color="#ffff00"/><stop offset="0.3838" stop-color="#c8ff16"/><stop offset="0.3915" stop-color="#a8ff2a"/><stop offset="0.4083" stop-color="#9cff2a"/><stop offset="0.4999" stop-color="#64ff1e"/><stop offset="0.5625" stop-color="#28ff14"/><stop offset="0.6251" stop-color="#0af00a"/><stop offset="0.6854" stop-color="#05d705"/><stop offset="0.7480" stop-color="#00be00"/><stop offset="0.8275" stop-color="#00a000"/><stop offset="0.9528" stop-color="#007d00"/><stop offset="1.0000" stop-color="#007600"/></linearGradient>
<linearGradient id="h45" gradientUnits="userSpaceOnUse" x1="921.50" y1="268.4" x2="1025.69" y2="725.24"><stop offset="0.0000" stop-color="#ee0000"/><stop offset="0.0617" stop-color="#ff0000"/><stop offset="0.2052" stop-color="#ff2300"/><stop offset="0.3319" stop-color="#ff4000"/><stop offset="0.3404" stop-color="#ff4e00"/><stop offset="0.3488" stop-color="#ff8000"/><stop offset="0.3578" stop-color="#ffbe00"/><stop offset="0.3685" stop-color="#ffff00"/><stop offset="0.3777" stop-color="#c8ff16"/><stop offset="0.3854" stop-color="#a8ff2a"/><stop offset="0.4024" stop-color="#9cff2a"/><stop offset="0.4942" stop-color="#64ff1e"/><stop offset="0.5571" stop-color="#28ff14"/><stop offset="0.6199" stop-color="#0af00a"/><stop offset="0.6804" stop-color="#05d705"/><stop offset="0.7432" stop-color="#00be00"/><stop offset="0.8230" stop-color="#00a000"/><stop offset="0.9487" stop-color="#007d00"/><stop offset="1.0000" stop-color="#007600"/></linearGradient>
<linearGradient id="h46" gradientUnits="userSpaceOnUse" x1="934.50" y1="268.4" x2="1040.43" y2="724.39"><stop offset="0.0000" stop-color="#f00000"/><stop offset="0.0537" stop-color="#ff0000"/><stop offset="0.1981" stop-color="#ff2300"/><stop offset="0.3255" stop-color="#ff4000"/><stop offset="0.3340" stop-color="#ff4e00"/><stop offset="0.3425" stop-color="#ff8000"/><stop offset="0.3515" stop-color="#ffbe00"/><stop offset="0.3623" stop-color="#ffff00"/><stop offset="0.3715" stop-color="#c8ff16"/><stop offset="0.3793" stop-color="#a8ff2a"/><stop offset="0.3962" stop-color="#9cff2a"/><stop offset="0.4884" stop-color="#64ff1e"/><stop offset="0.5515" stop-color="#28ff14"/><stop offset="0.6146" stop-color="#0af00a"/><stop offset="0.6752" stop-color="#05d705"/><stop offset="0.7383" stop-color="#00be00"/><stop offset="0.8184" stop-color="#00a000"/><stop offset="0.9445" stop-color="#007d00"/><stop offset="1.0000" stop-color="#007500"/></linearGradient>
<linearGradient id="h47" gradientUnits="userSpaceOnUse" x1="947.50" y1="268.4" x2="1055.16" y2="723.53"><stop offset="0.0000" stop-color="#f30000"/><stop offset="0.0456" stop-color="#ff0000"/><stop offset="0.1908" stop-color="#ff2300"/><stop offset="0.3189" stop-color="#ff4000"/><stop offset="0.3275" stop-color="#ff4e00"/><stop offset="0.3360" stop-color="#ff8000"/><stop offset="0.3451" stop-color="#ffbe00"/><stop offset="0.3559" stop-color="#ffff00"/><stop offset="0.3652" stop-color="#c8ff16"/><stop offset="0.3730" stop-color="#a8ff2a"/><stop offset="0.3900" stop-color="#9cff2a"/><stop offset="0.4825" stop-color="#64ff1e"/><stop offset="0.5459" stop-color="#28ff14"/><stop offset="0.6092" stop-color="#0af00a"/><stop offset="0.6700" stop-color="#05d705"/><stop offset="0.7333" stop-color="#00be00"/><stop offset="0.8137" stop-color="#00a000"/><stop offset="0.9403" stop-color="#007d00"/><stop offset="1.0000" stop-color="#007500"/></linearGradient>
<linearGradient id="h48" gradientUnits="userSpaceOnUse" x1="960.50" y1="268.4" x2="1069.88" y2="722.66"><stop offset="0.0000" stop-color="#f50000"/><stop offset="0.0374" stop-color="#ff0000"/><stop offset="0.1834" stop-color="#ff2300"/><stop offset="0.3123" stop-color="#ff4000"/><stop offset="0.3209" stop-color="#ff4e00"/><stop offset="0.3294" stop-color="#ff8000"/><stop offset="0.3386" stop-color="#ffbe00"/><stop offset="0.3495" stop-color="#ffff00"/><stop offset="0.3588" stop-color="#c8ff16"/><stop offset="0.3666" stop-color="#a8ff2a"/><stop offset="0.3837" stop-color="#9cff2a"/><stop offset="0.4765" stop-color="#64ff1e"/><stop offset="0.5401" stop-color="#28ff14"/><stop offset="0.6036" stop-color="#0af00a"/><stop offset="0.6647" stop-color="#05d705"/><stop offset="0.7282" stop-color="#00be00"/><stop offset="0.8089" stop-color="#00a000"/><stop offset="0.9359" stop-color="#007d00"/><stop offset="1.0000" stop-color="#007400"/></linearGradient>
</defs>
<rect x="330" y="308.4" width="14.0" height="400.6" fill="url(#h0)" shape-rendering="crispEdges"/>
<rect x="343" y="308.4" width="14.0" height="400.6" fill="url(#h1)" shape-rendering="crispEdges"/>
<rect x="356" y="308.4" width="14.0" height="400.6" fill="url(#h2)" shape-rendering="crispEdges"/>
<rect x="369" y="308.4" width="14.0" height="400.6" fill="url(#h3)" shape-rendering="crispEdges"/>
<rect x="382" y="308.4" width="14.0" height="400.6" fill="url(#h4)" shape-rendering="crispEdges"/>
<rect x="395" y="308.4" width="14.0" height="400.6" fill="url(#h5)" shape-rendering="crispEdges"/>
<rect x="408" y="308.4" width="14.0" height="400.6" fill="url(#h6)" shape-rendering="crispEdges"/>
<rect x="421" y="308.4" width="14.0" height="400.6" fill="url(#h7)" shape-rendering="crispEdges"/>
<rect x="434" y="308.4" width="14.0" height="400.6" fill="url(#h8)" shape-rendering="crispEdges"/>
<rect x="447" y="308.4" width="14.0" height="400.6" fill="url(#h9)" shape-rendering="crispEdges"/>
<rect x="460" y="308.4" width="14.0" height="400.6" fill="url(#h10)" shape-rendering="crispEdges"/>
<rect x="473" y="308.4" width="14.0" height="400.6" fill="url(#h11)" shape-rendering="crispEdges"/>
<rect x="486" y="308.4" width="14.0" height="400.6" fill="url(#h12)" shape-rendering="crispEdges"/>
<rect x="499" y="308.4" width="14.0" height="400.6" fill="url(#h13)" shape-rendering="crispEdges"/>
<rect x="512" y="308.4" width="14.0" height="400.6" fill="url(#h14)" shape-rendering="crispEdges"/>
<rect x="525" y="308.4" width="14.0" height="400.6" fill="url(#h15)" shape-rendering="crispEdges"/>
<rect x="538" y="308.4" width="14.0" height="400.6" fill="url(#h16)" shape-rendering="crispEdges"/>
<rect x="551" y="308.4" width="14.0" height="400.6" fill="url(#h17)" shape-rendering="crispEdges"/>
<rect x="564" y="308.4" width="14.0" height="400.6" fill="url(#h18)" shape-rendering="crispEdges"/>
<rect x="577" y="308.4" width="14.0" height="400.6" fill="url(#h19)" shape-rendering="crispEdges"/>
<rect x="590" y="308.4" width="14.0" height="400.6" fill="url(#h20)" shape-rendering="crispEdges"/>
<rect x="603" y="308.4" width="14.0" height="400.6" fill="url(#h21)" shape-rendering="crispEdges"/>
<rect x="616" y="308.4" width="14.0" height="400.6" fill="url(#h22)" shape-rendering="crispEdges"/>
<rect x="629" y="308.4" width="14.0" height="400.6" fill="url(#h23)" shape-rendering="crispEdges"/>
<rect x="642" y="308.4" width="14.0" height="400.6" fill="url(#h24)" shape-rendering="crispEdges"/>
<rect x="655" y="308.4" width="14.0" height="400.6" fill="url(#h25)" shape-rendering="crispEdges"/>
<rect x="668" y="308.4" width="14.0" height="400.6" fill="url(#h26)" shape-rendering="crispEdges"/>
<rect x="681" y="308.4" width="14.0" height="400.6" fill="url(#h27)" shape-rendering="crispEdges"/>
<rect x="694" y="308.4" width="14.0" height="400.6" fill="url(#h28)" shape-rendering="crispEdges"/>
<rect x="707" y="308.4" width="14.0" height="400.6" fill="url(#h29)" shape-rendering="crispEdges"/>
<rect x="720" y="308.4" width="14.0" height="400.6" fill="url(#h30)" shape-rendering="crispEdges"/>
<rect x="733" y="308.4" width="14.0" height="400.6" fill="url(#h31)" shape-rendering="crispEdges"/>
<rect x="746" y="308.4" width="14.0" height="400.6" fill="url(#h32)" shape-rendering="crispEdges"/>
<rect x="759" y="308.4" width="14.0" height="400.6" fill="url(#h33)" shape-rendering="crispEdges"/>
<rect x="772" y="308.4" width="14.0" height="400.6" fill="url(#h34)" shape-rendering="crispEdges"/>
<rect x="785" y="308.4" width="14.0" height="400.6" fill="url(#h35)" shape-rendering="crispEdges"/>
<rect x="798" y="308.4" width="14.0" height="400.6" fill="url(#h36)" shape-rendering="crispEdges"/>
<rect x="811" y="308.4" width="14.0" height="400.6" fill="url(#h37)" shape-rendering="crispEdges"/>
<rect x="824" y="308.4" width="14.0" height="400.6" fill="url(#h38)" shape-rendering="crispEdges"/>
<rect x="837" y="308.4" width="14.0" height="400.6" fill="url(#h39)" shape-rendering="crispEdges"/>
<rect x="850" y="308.4" width="14.0" height="400.6" fill="url(#h40)" shape-rendering="crispEdges"/>
<rect x="863" y="308.4" width="14.0" height="400.6" fill="url(#h41)" shape-rendering="crispEdges"/>
<rect x="876" y="308.4" width="14.0" height="400.6" fill="url(#h42)" shape-rendering="crispEdges"/>
<rect x="889" y="308.4" width="14.0" height="400.6" fill="url(#h43)" shape-rendering="crispEdges"/>
<rect x="902" y="308.4" width="14.0" height="400.6" fill="url(#h44)" shape-rendering="crispEdges"/>
<rect x="915" y="308.4" width="14.0" height="400.6" fill="url(#h45)" shape-rendering="crispEdges"/>
<rect x="928" y="308.4" width="14.0" height="400.6" fill="url(#h46)" shape-rendering="crispEdges"/>
<rect x="941" y="308.4" width="14.0" height="400.6" fill="url(#h47)" shape-rendering="crispEdges"/>
<rect x="954" y="308.4" width="13.6" height="400.6" fill="url(#h48)" shape-rendering="crispEdges"/>
<path d="M330.0 308.4 V709.0 H967.6" fill="none" stroke="#2a1a10" stroke-width="1.2"/>
<path d="M330.0 308.4 H967.6" fill="none" stroke="rgba(30,10,0,.75)" stroke-width="1"/>
<path d="M326.8 700.7 H330.0 M324.6 691.6 H330.0 M326.8 682.5 H330.0 M326.8 673.3 H330.0 M326.8 664.2 H330.0 M326.8 655.0 H330.0 M324.6 645.9 H330.0 M326.8 636.8 H330.0 M326.8 627.6 H330.0 M326.8 618.5 H330.0 M326.8 609.3 H330.0 M324.6 600.2 H330.0 M326.8 591.1 H330.0 M326.8 581.9 H330.0 M326.8 572.8 H330.0 M326.8 563.6 H330.0 M324.6 554.5 H330.0 M326.8 545.4 H330.0 M326.8 536.2 H330.0 M326.8 527.1 H330.0 M326.8 517.9 H330.0 M324.6 508.8 H330.0 M326.8 499.7 H330.0 M326.8 490.5 H330.0 M326.8 481.4 H330.0 M326.8 472.2 H330.0 M324.6 463.1 H330.0 M326.8 454.0 H330.0 M326.8 444.8 H330.0 M326.8 435.7 H330.0 M326.8 426.5 H330.0 M324.6 417.4 H330.0 M326.8 408.3 H330.0 M326.8 399.1 H330.0 M326.8 390.0 H330.0 M326.8 380.8 H330.0 M324.6 371.7 H330.0 M326.8 362.6 H330.0 M326.8 353.4 H330.0 M326.8 344.3 H330.0 M326.8 335.1 H330.0 M324.6 326.0 H330.0 M326.8 316.9 H330.0 M344.0 709.0 V711.2 M358.5 709.0 V712.6 M373.0 709.0 V711.2 M387.5 709.0 V711.2 M402.0 709.0 V711.2 M416.5 709.0 V711.2 M431.0 709.0 V712.6 M445.5 709.0 V711.2 M460.1 709.0 V711.2 M474.6 709.0 V711.2 M489.1 709.0 V711.2 M503.6 709.0 V712.6 M518.1 709.0 V711.2 M532.6 709.0 V711.2 M547.1 709.0 V711.2 M561.6 709.0 V711.2 M576.1 709.0 V712.6 M590.6 709.0 V711.2 M605.1 709.0 V711.2 M619.6 709.0 V711.2 M634.2 709.0 V711.2 M648.7 709.0 V712.6 M663.2 709.0 V711.2 M677.7 709.0 V711.2 M692.2 709.0 V711.2 M706.7 709.0 V711.2 M721.2 709.0 V712.6 M735.7 709.0 V711.2 M750.2 709.0 V711.2 M764.7 709.0 V711.2 M779.2 709.0 V711.2 M793.7 709.0 V712.6 M808.2 709.0 V711.2 M822.8 709.0 V711.2 M837.3 709.0 V711.2 M851.8 709.0 V711.2 M866.3 709.0 V712.6 M880.8 709.0 V711.2 M895.3 709.0 V711.2 M909.8 709.0 V711.2 M924.3 709.0 V711.2 M938.8 709.0 V712.6 M953.3 709.0 V711.2 M967.8 709.0 V711.2 " stroke="#333" stroke-width="1" fill="none"/>
<text x="321.7" y="329.5" font-size="9.6" fill="#333" text-anchor="end" textLength="8.7" lengthAdjust="spacingAndGlyphs">34</text>
<text x="321.7" y="375.2" font-size="9.6" fill="#333" text-anchor="end" textLength="15.3" lengthAdjust="spacingAndGlyphs">33.5</text>
<text x="321.7" y="420.9" font-size="9.6" fill="#333" text-anchor="end" textLength="8.7" lengthAdjust="spacingAndGlyphs">33</text>
<text x="321.7" y="466.6" font-size="9.6" fill="#333" text-anchor="end" textLength="15.3" lengthAdjust="spacingAndGlyphs">32.5</text>
<text x="321.7" y="512.3" font-size="9.6" fill="#333" text-anchor="end" textLength="8.7" lengthAdjust="spacingAndGlyphs">32</text>
<text x="321.7" y="558.0" font-size="9.6" fill="#333" text-anchor="end" textLength="15.3" lengthAdjust="spacingAndGlyphs">31.5</text>
<text x="321.7" y="603.7" font-size="9.6" fill="#333" text-anchor="end" textLength="8.7" lengthAdjust="spacingAndGlyphs">31</text>
<text x="321.7" y="649.4" font-size="9.6" fill="#333" text-anchor="end" textLength="15.3" lengthAdjust="spacingAndGlyphs">30.5</text>
<text x="321.7" y="695.1" font-size="9.6" fill="#333" text-anchor="end" textLength="8.7" lengthAdjust="spacingAndGlyphs">30</text>
<text x="358.5" y="726.4" font-size="9.6" fill="#333" text-anchor="middle" textLength="8.7" lengthAdjust="spacingAndGlyphs">26</text>
<text x="431.0" y="726.4" font-size="9.6" fill="#333" text-anchor="middle" textLength="8.7" lengthAdjust="spacingAndGlyphs">27</text>
<text x="503.6" y="726.4" font-size="9.6" fill="#333" text-anchor="middle" textLength="8.7" lengthAdjust="spacingAndGlyphs">28</text>
<text x="576.1" y="726.4" font-size="9.6" fill="#333" text-anchor="middle" textLength="8.7" lengthAdjust="spacingAndGlyphs">29</text>
<text x="648.7" y="726.4" font-size="9.6" fill="#333" text-anchor="middle" textLength="8.7" lengthAdjust="spacingAndGlyphs">30</text>
<text x="721.2" y="726.4" font-size="9.6" fill="#333" text-anchor="middle" textLength="8.7" lengthAdjust="spacingAndGlyphs">31</text>
<text x="793.7" y="726.4" font-size="9.6" fill="#333" text-anchor="middle" textLength="8.7" lengthAdjust="spacingAndGlyphs">32</text>
<text x="866.3" y="726.4" font-size="9.6" fill="#333" text-anchor="middle" textLength="8.7" lengthAdjust="spacingAndGlyphs">33</text>
<text x="938.8" y="726.4" font-size="9.6" fill="#333" text-anchor="middle" textLength="8.7" lengthAdjust="spacingAndGlyphs">34</text>
<text x="616.3" y="737.8" font-size="9.3" fill="#333" text-anchor="start" textLength="65.1" lengthAdjust="spacingAndGlyphs">Temperature [°C]</text>
<text transform="translate(303.8,546.2) rotate(-90)" font-size="9.3" fill="#333" textLength="75.4" lengthAdjust="spacingAndGlyphs">Concentration C [%]</text>
<defs><linearGradient id="cb" x1="0" y1="0" x2="0" y2="1"><stop offset="0" stop-color="#007000"/><stop offset=".2" stop-color="#00a000"/><stop offset=".45" stop-color="#00d400"/><stop offset=".75" stop-color="#10f010"/><stop offset=".93" stop-color="#58f820"/><stop offset="1" stop-color="#b8f030"/></linearGradient><linearGradient id="cr" x1="0" y1="0" x2="0" y2="1"><stop offset="0" stop-color="#ff3000"/><stop offset=".35" stop-color="#f01000"/><stop offset=".7" stop-color="#d80000"/><stop offset="1" stop-color="#b00000"/></linearGradient></defs>
<rect x="967.6" y="308.4" width="3.6" height="195.6" fill="url(#cb)"/>
<rect x="967.6" y="520" width="3.6" height="189.0" fill="url(#cr)"/>
<path d="M968.2 522.0 h3 M968.2 528.0 h3 M968.2 533.9 h3 M968.2 539.9 h3 M968.2 545.8 h3 M968.2 551.8 h3 M968.2 557.7 h3 M968.2 563.6 h3 M968.2 569.6 h3 M968.2 575.5 h3 M968.2 581.5 h3 M968.2 587.5 h3 M968.2 593.4 h3 M968.2 599.4 h3 M968.2 605.3 h3 M968.2 611.2 h3 M968.2 617.2 h3 M968.2 623.1 h3 M968.2 629.1 h3 M968.2 635.0 h3 M968.2 641.0 h3 M968.2 647.0 h3 M968.2 652.9 h3 M968.2 658.9 h3 M968.2 664.8 h3 M968.2 670.8 h3 M968.2 676.7 h3 M968.2 682.6 h3 M968.2 688.6 h3 M968.2 694.5 h3 M968.2 700.5 h3 M968.2 706.5 h3 " stroke="rgba(255,225,200,.6)" stroke-width=".9"/>
<path d="M967.6 308.4 V709.0" stroke="#1a1a1a" stroke-width="1"/>
<path d="M967.6 702.4 h2.4 M967.6 690.6 h2.4 M967.6 678.7 h2.4 M967.6 666.8 h4.6 M967.6 654.9 h2.4 M967.6 643.0 h2.4 M967.6 631.2 h2.4 M967.6 619.3 h2.4 M967.6 607.4 h4.6 M967.6 595.5 h2.4 M967.6 583.6 h2.4 M967.6 571.8 h2.4 M967.6 559.9 h2.4 M967.6 548.0 h4.6 M967.6 536.1 h2.4 M967.6 524.2 h2.4 M967.6 512.4 h2.4 M967.6 500.5 h2.4 M967.6 488.6 h4.6 M967.6 476.7 h2.4 M967.6 464.8 h2.4 M967.6 453.0 h2.4 M967.6 441.1 h2.4 M967.6 429.2 h4.6 M967.6 417.3 h2.4 M967.6 405.4 h2.4 M967.6 393.6 h2.4 M967.6 381.7 h2.4 M967.6 369.8 h4.6 M967.6 357.9 h2.4 M967.6 346.0 h2.4 M967.6 334.2 h2.4 M967.6 322.3 h2.4 M967.6 310.4 h4.6 " stroke="#222" stroke-width="1" fill="none"/>
<text x="975.7" y="313.9" font-size="9.6" fill="#333" text-anchor="start" textLength="11.0" lengthAdjust="spacingAndGlyphs">3.5</text>
<text x="975.7" y="373.3" font-size="9.6" fill="#333" text-anchor="start" textLength="4.3" lengthAdjust="spacingAndGlyphs">3</text>
<text x="975.7" y="432.7" font-size="9.6" fill="#333" text-anchor="start" textLength="11.0" lengthAdjust="spacingAndGlyphs">2.5</text>
<text x="975.7" y="492.1" font-size="9.6" fill="#333" text-anchor="start" textLength="4.3" lengthAdjust="spacingAndGlyphs">2</text>
<text x="975.7" y="551.5" font-size="9.6" fill="#333" text-anchor="start" textLength="11.0" lengthAdjust="spacingAndGlyphs">1.5</text>
<text x="975.7" y="610.9" font-size="9.6" fill="#333" text-anchor="start" textLength="4.3" lengthAdjust="spacingAndGlyphs">1</text>
<text x="975.7" y="670.3" font-size="9.6" fill="#333" text-anchor="start" textLength="11.0" lengthAdjust="spacingAndGlyphs">0.5</text>
<text transform="translate(996.9,513.4) rotate(-90)" font-size="9.4" fill="#333" textLength="9.4" lengthAdjust="spacingAndGlyphs">Rs</text>
<rect x="431.0" y="371.7" width="435.2" height="274.2" fill="none" stroke="rgba(0,0,0,.58)" stroke-width="1" stroke-dasharray="6.3 1.6"/>
<path d="M651.2 308.4 V709.0 M330.0 506.3 H971.2" stroke="rgba(0,0,0,.42)" stroke-width="1.05" fill="none"/>
<circle cx="503.8" cy="509.0" r="2.9" fill="#e9dfd2" stroke="#1b2733" stroke-width="1"/>
<circle cx="648.9" cy="417.7" r="2.9" fill="#e9dfd2" stroke="#1b2733" stroke-width="1"/>
<circle cx="793.9" cy="509.0" r="2.9" fill="#d2d6de" stroke="#1b2733" stroke-width="1"/>
<circle cx="648.9" cy="599.4" r="2.9" fill="#c6d2ea" stroke="#1b2733" stroke-width="1"/>
<rect x="646.2" y="506.2" width="5.6" height="5.6" fill="#f0a6f6" stroke="#1b1b1b" stroke-width="1"/>
</svg>
<div class="a" style="left:290.5px;top:728px;width:11.0px;height:11px;background:#f0f0f0;border:1px solid #b5b5b5;box-sizing:border-box;"></div>
<div class="a" style="left:304.8px;top:728px;width:11.0px;height:11px;background:#f0f0f0;border:1px solid #b5b5b5;box-sizing:border-box;"></div>
<svg style="left:290px;top:727px" width="30" height="13" viewBox="290 727 30 13"><rect x="292.8" y="730.6" width="5" height="5.8" fill="#c9c9c9" stroke="#666" stroke-width=".7"/><rect x="294.6" y="729.6" width="4.6" height="5.6" fill="#e5e5e5" stroke="#555" stroke-width=".7"/><rect x="296" y="731" width="2" height="2.4" fill="#3a62a8"/><path d="M313.2 729.2 L310.6 733.4" stroke="#b98232" stroke-width="1.5"/><path d="M308.2 737.6 L309.4 733 L312.8 734.2 L312.4 737.8 Z" fill="#f3c73a" stroke="#c8962a" stroke-width=".5"/></svg>
<div class="a" style="left:287px;top:743px;width:714px;height:4px;background:#e5e5e5;"></div>
<div class="a" style="left:1001px;top:305.5px;width:4px;height:471.5px;background:#e5e5e5;"></div>
<svg style="left:636px;top:743px" width="16" height="4" viewBox="0 0 16 4"><path d="M1 1.6 h13" stroke="#111" stroke-width="1.3" stroke-dasharray="1.4 1.35"/></svg>
<svg style="left:1001px;top:540px" width="4" height="20" viewBox="0 0 4 20"><path d="M2 1 v14" stroke="#111" stroke-width="1.3" stroke-dasharray="1.4 1.35"/></svg>
<div class="t" style="left:294.00px;top:758.27px;font-size:9.6px;font-weight:bold;color:#1a1a1a;transform:scaleX(0.8944);">Z Axis: Flow rate: 1.09 ml/min</div>
<div class="a" style="left:294px;top:774.6px;width:700px;height:2.3999999999999773px;background:#d9d9d9;"></div>
<div class="a" style="left:779.6px;top:770.4px;width:5.199999999999932px;height:6.600000000000023px;background:#7d7d7d;"></div>
<div class="a" style="left:1245px;top:307px;width:1px;height:470px;background:#e8e8e8;"></div>
<div class="a" style="left:1005px;top:484.4px;width:240px;height:3.8000000000000114px;background:#e5e5e5;"></div>
<svg style="left:1117px;top:484px" width="16" height="4" viewBox="0 0 16 4"><path d="M1 1.9 h13" stroke="#111" stroke-width="1.3" stroke-dasharray="1.4 1.35"/></svg>
<div class="a" style="left:1009.5px;top:469.5px;width:11.0px;height:11.0px;background:#f0f0f0;border:1px solid #b5b5b5;box-sizing:border-box;"></div>
<svg style="left:1009px;top:469px" width="12" height="12" viewBox="1009 469 12 12"><rect x="1011.8" y="472.4" width="5" height="5.8" fill="#c9c9c9" stroke="#666" stroke-width=".7"/><rect x="1013.6" y="471.4" width="4.6" height="5.6" fill="#e5e5e5" stroke="#555" stroke-width=".7"/><rect x="1015" y="472.8" width="2" height="2.4" fill="#3a62a8"/></svg>
<svg id="chrom" style="left:0;top:0" width="1342" height="777" viewBox="0 0 1342 777" font-family="Liberation Sans, sans-serif">
<rect x="1058.2" y="314.2" width="171.8" height="130.6" fill="#fff" stroke="#1a1a1a" stroke-width="1"/>
<path d="M1060.0 438.6 L1060.5 438.6 L1061.0 438.6 L1061.5 438.6 L1062.0 438.6 L1062.5 438.6 L1063.0 438.6 L1063.5 438.6 L1064.0 438.6 L1064.5 438.6 L1065.0 438.6 L1065.5 438.6 L1066.0 438.6 L1066.5 438.6 L1067.0 438.6 L1067.5 438.6 L1068.0 438.6 L1068.5 438.6 L1069.0 438.6 L1069.5 438.6 L1070.0 438.6 L1070.5 438.6 L1071.0 438.6 L1071.5 438.6 L1072.0 438.6 L1072.5 438.6 L1073.0 438.6 L1073.5 438.6 L1074.0 438.6 L1074.5 438.6 L1075.0 438.6 L1075.5 438.6 L1076.0 438.6 L1076.5 438.6 L1077.0 438.6 L1077.5 438.6 L1078.0 438.6 L1078.5 438.6 L1079.0 438.6 L1079.5 438.6 L1080.0 438.6 L1080.5 438.6 L1081.0 438.6 L1081.5 438.6 L1082.0 438.6 L1082.5 438.6 L1083.0 438.6 L1083.5 438.6 L1084.0 438.6 L1084.5 438.6 L1085.0 438.6 L1085.5 438.6 L1086.0 438.6 L1086.5 438.6 L1087.0 438.6 L1087.5 438.6 L1088.0 438.4 L1088.5 437.9 L1089.0 436.3 L1089.5 432.0 L1090.0 423.1 L1090.5 408.7 L1091.0 390.6 L1091.5 374.8 L1092.0 368.5 L1092.5 374.8 L1093.0 390.6 L1093.5 408.7 L1094.0 423.1 L1094.5 432.0 L1095.0 436.3 L1095.5 437.9 L1096.0 438.4 L1096.5 438.6 L1097.0 438.6 L1097.5 438.6 L1098.0 438.6 L1098.5 438.6 L1099.0 438.6 L1099.5 438.6 L1100.0 438.6 L1100.5 438.6 L1101.0 438.6 L1101.5 438.4 L1102.0 437.7 L1102.5 435.6 L1103.0 430.3 L1103.5 419.1 L1104.0 400.2 L1104.5 375.0 L1105.0 350.2 L1105.5 335.2 L1106.0 337.0 L1106.5 354.7 L1107.0 380.3 L1107.5 404.6 L1108.0 421.9 L1108.5 431.7 L1109.0 436.2 L1109.5 437.9 L1110.0 438.4 L1110.5 438.6 L1111.0 438.6 L1111.5 438.6 L1112.0 438.6 L1112.5 438.6 L1113.0 438.6 L1113.5 438.6 L1114.0 438.6 L1114.5 438.6 L1115.0 438.6 L1115.5 438.6 L1116.0 438.6 L1116.5 438.6 L1117.0 438.6 L1117.5 438.6 L1118.0 438.6 L1118.5 438.6 L1119.0 438.6 L1119.5 438.6 L1120.0 438.6 L1120.5 438.6 L1121.0 438.6 L1121.5 438.6 L1122.0 438.6 L1122.5 438.6 L1123.0 438.5 L1123.5 438.3 L1124.0 437.7 L1124.5 436.3 L1125.0 433.3 L1125.5 428.0 L1126.0 419.4 L1126.5 407.7 L1127.0 394.0 L1127.5 381.0 L1128.0 372.1 L1128.5 369.9 L1129.0 375.0 L1129.5 385.9 L1130.0 399.6 L1130.5 412.7 L1131.0 423.3 L1131.5 430.5 L1132.0 434.7 L1132.5 436.9 L1133.0 437.8 L1133.5 437.9 L1134.0 437.3 L1134.5 435.7 L1135.0 432.7 L1135.5 427.8 L1136.0 420.8 L1136.5 412.4 L1137.0 404.0 L1137.5 397.7 L1138.0 395.4 L1138.5 397.7 L1139.0 404.0 L1139.5 412.4 L1140.0 420.8 L1140.5 427.8 L1141.0 432.8 L1141.5 435.8 L1142.0 437.4 L1142.5 438.1 L1143.0 438.4 L1143.5 438.5 L1144.0 438.6 L1144.5 438.6 L1145.0 438.6 L1145.5 438.6 L1146.0 438.6 L1146.5 438.6 L1147.0 438.6 L1147.5 438.6 L1148.0 438.6 L1148.5 438.6 L1149.0 438.6 L1149.5 438.6 L1150.0 438.6 L1150.5 438.6 L1151.0 438.6 L1151.5 438.6 L1152.0 438.6 L1152.5 438.6 L1153.0 438.6 L1153.5 438.6 L1154.0 438.6 L1154.5 438.6 L1155.0 438.6 L1155.5 438.6 L1156.0 438.6 L1156.5 438.6 L1157.0 438.6 L1157.5 438.6 L1158.0 438.6 L1158.5 438.6 L1159.0 438.6 L1159.5 438.6 L1160.0 438.6 L1160.5 438.6 L1161.0 438.6 L1161.5 438.6 L1162.0 438.6 L1162.5 438.6 L1163.0 438.6 L1163.5 438.6 L1164.0 438.6 L1164.5 438.6 L1165.0 438.6 L1165.5 438.6 L1166.0 438.6 L1166.5 438.5 L1167.0 438.4 L1167.5 438.1 L1168.0 437.7 L1168.5 437.0 L1169.0 435.8 L1169.5 434.3 L1170.0 432.2 L1170.5 429.9 L1171.0 427.5 L1171.5 425.5 L1172.0 424.0 L1172.5 423.5 L1173.0 424.0 L1173.5 425.5 L1174.0 427.5 L1174.5 429.9 L1175.0 432.2 L1175.5 434.3 L1176.0 435.8 L1176.5 437.0 L1177.0 437.7 L1177.5 438.1 L1178.0 438.4 L1178.5 438.5 L1179.0 438.6 L1179.5 438.6 L1180.0 438.6 L1180.5 438.6 L1181.0 438.6 L1181.5 438.6 L1182.0 438.6 L1182.5 438.6 L1183.0 438.6 L1183.5 438.6 L1184.0 438.6 L1184.5 438.6 L1185.0 438.6 L1185.5 438.6 L1186.0 438.6 L1186.5 438.6 L1187.0 438.6 L1187.5 438.6 L1188.0 438.6 L1188.5 438.6 L1189.0 438.6 L1189.5 438.6 L1190.0 438.6 L1190.5 438.6 L1191.0 438.6 L1191.5 438.6 L1192.0 438.6 L1192.5 438.6 L1193.0 438.6 L1193.5 438.6 L1194.0 438.6 L1194.5 438.6 L1195.0 438.6 L1195.5 438.6 L1196.0 438.6 L1196.5 438.6 L1197.0 438.6 L1197.5 438.6 L1198.0 438.6 L1198.5 438.6 L1199.0 438.6 L1199.5 438.6 L1200.0 438.6 L1200.5 438.6 L1201.0 438.6 L1201.5 438.6 L1202.0 438.6 L1202.5 438.6 L1203.0 438.6 L1203.5 438.5 L1204.0 438.4 L1204.5 438.3 L1205.0 438.1 L1205.5 437.7 L1206.0 437.1 L1206.5 436.3 L1207.0 435.2 L1207.5 433.6 L1208.0 431.5 L1208.5 428.9 L1209.0 425.7 L1209.5 422.2 L1210.0 418.4 L1210.5 414.5 L1211.0 410.9 L1211.5 407.8 L1212.0 405.5 L1212.5 404.2 L1213.0 404.1 L1213.5 405.1 L1214.0 407.3 L1214.5 410.2 L1215.0 413.8 L1215.5 417.6 L1216.0 421.5 L1216.5 425.1 L1217.0 428.3 L1217.5 431.0 L1218.0 433.2 L1218.5 434.9 L1219.0 436.1 L1219.5 437.0 L1220.0 437.6 L1220.5 438.0 L1221.0 438.3 L1221.5 438.4 L1222.0 438.5 L1222.5 438.5 L1223.0 438.6 L1223.5 438.6 L1224.0 438.6 L1224.5 438.6 L1225.0 438.6 L1225.5 438.6 L1226.0 438.6 L1226.5 438.6 L1227.0 438.6 L1227.5 438.6 L1228.0 438.6 L1228.5 438.6" fill="none" stroke="#222" stroke-width="1"/>
<circle cx="1092.0" cy="368.5" r="1.4" fill="#fff" stroke="#111" stroke-width="1.1"/>
<text x="1090.6" y="362.3" font-size="6.4" fill="#222">2</text>
<circle cx="1105.7" cy="333.8" r="1.4" fill="#fff" stroke="#111" stroke-width="1.1"/>
<circle cx="1128.4" cy="369.7" r="1.4" fill="#fff" stroke="#111" stroke-width="1.1"/>
<text x="1127.0" y="363.5" font-size="6.4" fill="#222">4</text>
<circle cx="1138.0" cy="395.4" r="1.4" fill="#fff" stroke="#111" stroke-width="1.1"/>
<text x="1136.6" y="389.2" font-size="6.4" fill="#222">5</text>
<circle cx="1172.5" cy="423.5" r="1.4" fill="#fff" stroke="#111" stroke-width="1.1"/>
<text x="1171.1" y="417.3" font-size="6.4" fill="#222">6</text>
<circle cx="1212.8" cy="404.0" r="1.4" fill="#fff" stroke="#111" stroke-width="1.1"/>
<text x="1211.4" y="397.8" font-size="6.4" fill="#222">7</text>
<path d="M1098.8 327.6 h3.2 M1106.6 327.6 h2.8" stroke="#222" stroke-width=".9"/><text x="1102.6" y="327.2" font-size="6.6" fill="#222">3</text>
<text x="1113.8" y="331.4" font-size="8.8" fill="#333" textLength="107.6" lengthAdjust="spacingAndGlyphs">30.04°C, 32.02%, 1.09ml/min</text>
<path d="M1053.6000000000001 438.6 H1058.2 M1055.6000000000001 429.9 H1058.2 M1055.6000000000001 421.2 H1058.2 M1055.6000000000001 412.4 H1058.2 M1055.6000000000001 403.7 H1058.2 M1053.6000000000001 395.0 H1058.2 M1055.6000000000001 386.3 H1058.2 M1055.6000000000001 377.6 H1058.2 M1055.6000000000001 368.8 H1058.2 M1055.6000000000001 360.1 H1058.2 M1053.6000000000001 351.4 H1058.2 M1055.6000000000001 342.7 H1058.2 M1055.6000000000001 334.0 H1058.2 M1055.6000000000001 325.2 H1058.2 M1055.6000000000001 316.5 H1058.2 M1059.7 444.8 v4.6 M1071.9 444.8 v2.6 M1084.1 444.8 v2.6 M1096.2 444.8 v2.6 M1108.4 444.8 v2.6 M1120.6 444.8 v4.6 M1132.8 444.8 v2.6 M1145.0 444.8 v2.6 M1157.1 444.8 v2.6 M1169.3 444.8 v2.6 M1181.5 444.8 v4.6 M1193.7 444.8 v2.6 M1205.9 444.8 v2.6 M1218.0 444.8 v2.6 " stroke="#222" stroke-width="1" fill="none"/>
<text x="1051.2" y="354.8" font-size="9.4" fill="#333" text-anchor="end" textLength="24.8" lengthAdjust="spacingAndGlyphs">1000.0</text>
<text x="1051.2" y="398.4" font-size="9.4" fill="#333" text-anchor="end" textLength="20.3" lengthAdjust="spacingAndGlyphs">500.0</text>
<text x="1051.2" y="442.0" font-size="9.4" fill="#333" text-anchor="end" textLength="11.3" lengthAdjust="spacingAndGlyphs">0.0</text>
<text x="1059.7" y="462" font-size="9.4" fill="#333" text-anchor="middle" textLength="4.6" lengthAdjust="spacingAndGlyphs">0</text>
<text x="1120.6" y="462" font-size="9.4" fill="#333" text-anchor="middle" textLength="4.6" lengthAdjust="spacingAndGlyphs">2</text>
<text x="1181.5" y="462" font-size="9.4" fill="#333" text-anchor="middle" textLength="4.6" lengthAdjust="spacingAndGlyphs">4</text>
<text x="1124.2" y="473.6" font-size="9.4" fill="#333" textLength="39.6" lengthAdjust="spacingAndGlyphs">Time [min]</text>
<text transform="translate(1023.2,408.6) rotate(-90)" font-size="9.4" fill="#333" textLength="58.6" lengthAdjust="spacingAndGlyphs">Intensity [mAU]</text>
</svg>
<div class="t" style="left:1016.40px;top:495.78px;font-size:9.3px;font-weight:bold;color:#3a3a3a;transform:scaleX(0.8936);">Choose peaks to include</div>
<div class="t" style="left:1030.90px;top:514.18px;font-size:9.3px;font-weight:bold;color:#3a3a3a;transform:scaleX(0.8836);">All</div>
<div class="a" style="left:1019.2px;top:515.8px;width:8.599999999999909px;height:8.600000000000023px;background:#fff;border:1px solid #dedede;box-sizing:border-box;"></div>
<div class="t" style="left:1030.90px;top:529.23px;font-size:9.3px;font-weight:bold;color:#3a3a3a;transform:scaleX(0.9228);">Peak #1 / Peak #2</div>
<div class="a" style="left:1019.2px;top:530.8499999999999px;width:8.599999999999909px;height:8.600000000000023px;background:#fff;border:1px solid #dedede;box-sizing:border-box;"></div>
<div class="t" style="left:1030.90px;top:544.28px;font-size:9.3px;font-weight:bold;color:#3a3a3a;transform:scaleX(0.9228);">Peak #2 / Peak #3</div>
<div class="a" style="left:1019.2px;top:545.9px;width:8.599999999999909px;height:8.600000000000023px;background:#fff;border:1px solid #dedede;box-sizing:border-box;"></div>
<div class="t" style="left:1030.90px;top:559.33px;font-size:9.3px;font-weight:bold;color:#3a3a3a;transform:scaleX(0.9228);">Peak #3 / Peak #4</div>
<div class="a" style="left:1019.2px;top:560.9499999999999px;width:8.599999999999909px;height:8.600000000000023px;background:#fff;border:1px solid #dedede;box-sizing:border-box;"></div>
<div class="t" style="left:1030.90px;top:574.38px;font-size:9.3px;font-weight:bold;color:#3a3a3a;transform:scaleX(0.9228);">Peak #4 / Peak #5</div>
<div class="a" style="left:1019.2px;top:576.0px;width:8.599999999999909px;height:8.600000000000023px;background:#fff;border:1px solid #dedede;box-sizing:border-box;"></div>
<div class="t" style="left:1030.90px;top:589.43px;font-size:9.3px;font-weight:bold;color:#3a3a3a;transform:scaleX(0.9228);">Peak #5 / Peak #6</div>
<div class="a" style="left:1019.2px;top:591.05px;width:8.599999999999909px;height:8.600000000000023px;background:#fff;border:1px solid #dedede;box-sizing:border-box;"></div>
<div class="t" style="left:1030.90px;top:604.48px;font-size:9.3px;font-weight:bold;color:#3a3a3a;transform:scaleX(0.9228);">Peak #6 / Peak #7</div>
<div class="a" style="left:1019.2px;top:606.1px;width:8.599999999999909px;height:8.600000000000023px;background:#fff;border:1px solid #dedede;box-sizing:border-box;"></div>
<svg style="left:0;top:0" width="1342" height="777" viewBox="0 0 1342 777">
<path d="M1019.8 519.9 L1022.5 522.5 L1027 516.4" fill="none" stroke="#1b9fe4" stroke-width="1.9"/>
<path d="M1019.8 534.9 L1022.5 537.5 L1027 531.4" fill="none" stroke="#1b9fe4" stroke-width="1.9"/>
<path d="M1019.8 550.0 L1022.5 552.6 L1027 546.5" fill="none" stroke="#1b9fe4" stroke-width="1.9"/>
<path d="M1019.8 565.0 L1022.5 567.6 L1027 561.5" fill="none" stroke="#1b9fe4" stroke-width="1.9"/>
<path d="M1019.8 580.1 L1022.5 582.7 L1027 576.6" fill="none" stroke="#1b9fe4" stroke-width="1.9"/>
<path d="M1019.8 595.1 L1022.5 597.8 L1027 591.6" fill="none" stroke="#1b9fe4" stroke-width="1.9"/>
<path d="M1019.8 610.2 L1022.5 612.8 L1027 606.7" fill="none" stroke="#1b9fe4" stroke-width="1.9"/>
<path d="M1235.3 499.6 L1238.3 496 L1241.3 499.6 Z" fill="#8a8a8a"/>
</svg>
<div class="a" style="left:1235.4px;top:506.6px;width:5.5px;height:269.0px;background:#808080;"></div>
<div class="t" style="left:1016.70px;top:623.18px;font-size:9.3px;font-weight:bold;color:#3a3a3a;transform:scaleX(0.8794);">X Axis</div>
<div class="t" style="left:1016.70px;top:664.18px;font-size:9.3px;font-weight:bold;color:#3a3a3a;transform:scaleX(0.8704);">Y Axis</div>
<div class="t" style="left:1016.70px;top:705.18px;font-size:9.3px;font-weight:bold;color:#3a3a3a;transform:scaleX(0.8816);">Z Axis</div>
<div class="t" style="left:1016.70px;top:746.18px;font-size:9.3px;font-weight:bold;color:#3a3a3a;transform:scaleX(0.9409);">Model type</div>
<div class="a" style="left:1016.2px;top:638px;width:76.0px;height:18.399999999999977px;background:linear-gradient(#f1f1f1,#e6e6e6);border:1px solid #c4c4c4;box-sizing:border-box;"></div>
<div class="t" style="left:1020.60px;top:641.37px;font-size:9.6px;font-weight:bold;color:#0a0a0a;transform:scaleX(0.9697);">Temperature</div>
<svg style="left:1081.6px;top:644.2px" width="8" height="6" viewBox="0 0 8 6"><path d="M1.4 1.6 L3.7 4 L6 1.6" fill="none" stroke="#555" stroke-width=".9"/></svg>
<div class="a" style="left:1016.2px;top:679px;width:91.39999999999986px;height:18.399999999999977px;background:linear-gradient(#f1f1f1,#e6e6e6);border:1px solid #c4c4c4;box-sizing:border-box;"></div>
<div class="t" style="left:1020.60px;top:682.37px;font-size:9.6px;font-weight:bold;color:#0a0a0a;transform:scaleX(0.9455);">Concentration C</div>
<svg style="left:1097.0px;top:685.2px" width="8" height="6" viewBox="0 0 8 6"><path d="M1.4 1.6 L3.7 4 L6 1.6" fill="none" stroke="#555" stroke-width=".9"/></svg>
<div class="a" style="left:1016.2px;top:720px;width:60.799999999999955px;height:18.200000000000045px;background:linear-gradient(#f1f1f1,#e6e6e6);border:1px solid #c4c4c4;box-sizing:border-box;"></div>
<div class="t" style="left:1020.60px;top:723.27px;font-size:9.6px;font-weight:bold;color:#0a0a0a;transform:scaleX(0.9634);">Flow rate</div>
<svg style="left:1066.4px;top:726.1px" width="8" height="6" viewBox="0 0 8 6"><path d="M1.4 1.6 L3.7 4 L6 1.6" fill="none" stroke="#555" stroke-width=".9"/></svg>
<div class="a" style="left:1016.2px;top:761px;width:63.0px;height:16px;background:linear-gradient(#f1f1f1,#e6e6e6);border:1px solid #c4c4c4;box-sizing:border-box;"></div>
<div class="t" style="left:1020.60px;top:764.37px;font-size:9.6px;font-weight:bold;color:#0a0a0a;transform:scaleX(0.9595);">Quadratic</div>
<svg style="left:1068.6px;top:767.2px" width="8" height="6" viewBox="0 0 8 6"><path d="M1.4 1.6 L3.7 4 L6 1.6" fill="none" stroke="#555" stroke-width=".9"/></svg>
</body></html>
